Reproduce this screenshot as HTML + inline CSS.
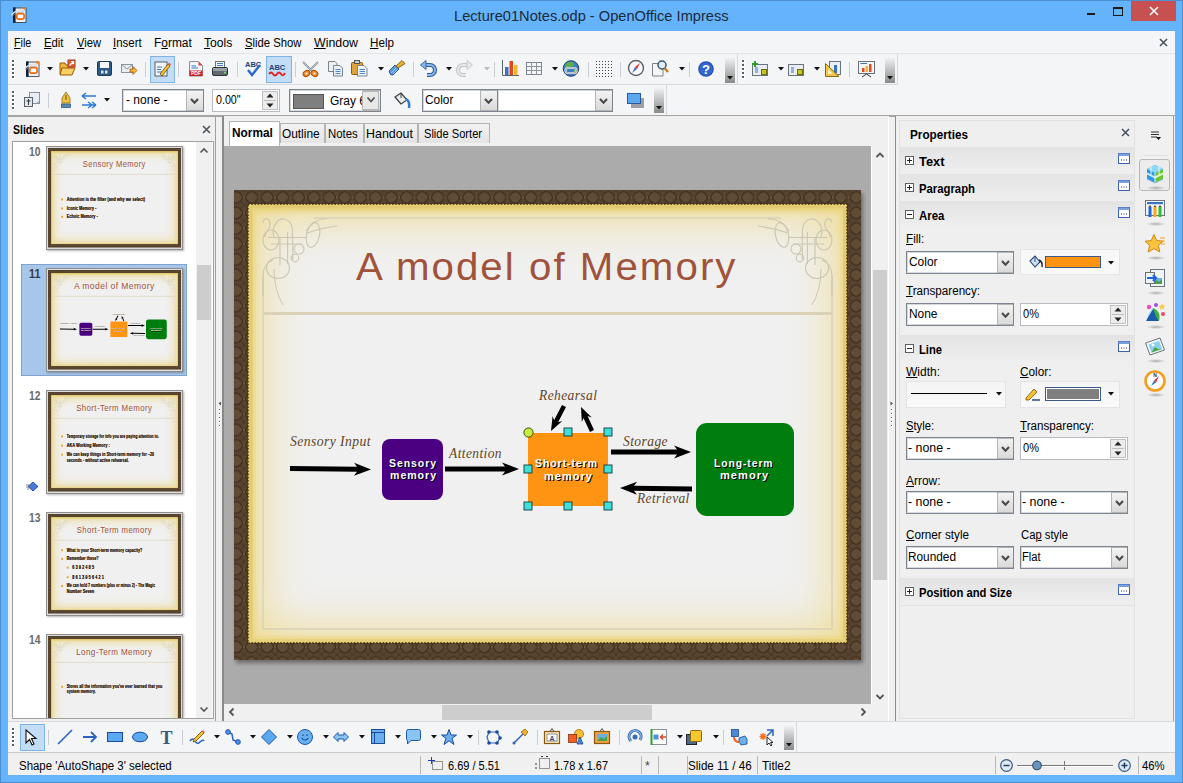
<!DOCTYPE html><html><head><meta charset="utf-8"><style>
*{margin:0;padding:0;box-sizing:border-box}
html,body{width:1183px;height:783px;overflow:hidden;background:#65b3fb;font-family:'Liberation Sans', sans-serif;}
div{position:absolute}
u{text-decoration:underline;text-underline-offset:1px;text-decoration-thickness:1px}
svg{position:absolute;overflow:visible}
</style></head><body><div style="position:absolute;left:0px;top:0px;width:1183px;height:783px;background:#65b3fb;border:1px solid #4c8fd0"></div><div style="position:absolute;left:454px;top:8px;font-size:15.2px;color:#1b2a3a;white-space:nowrap;line-height:1;font-family:'Liberation Sans', sans-serif;font-weight:normal;font-style:normal;letter-spacing:0px;transform-origin:0 0;transform:scaleX(0.9633);">Lecture01Notes.odp - OpenOffice Impress</div><div style="position:absolute;left:1087px;top:13px;width:8px;height:2px;background:#1a1a1a"></div><div style="position:absolute;left:1113px;top:7px;width:10px;height:9px;border:1px solid #1a1a1a;border-top-width:2px"></div><div style="position:absolute;left:1131px;top:1px;width:45px;height:20px;background:#c75050"></div><svg style="left:1149px;top:6px;" width="10" height="10" viewBox="0 0 10 10"><path d="M1 1L9 9M9 1L1 9" stroke="#fff" stroke-width="1.6"/></svg><svg style="left:11px;top:7px;" width="16" height="16" viewBox="0 0 16 16"><rect x="2.5" y="1" width="12.5" height="14.5" fill="#eef2f5" stroke="#2a3440" stroke-width="0.8"/><rect x="2" y="0.5" width="2.6" height="15.2" fill="#0c2138"/><rect x="5.8" y="6.6" width="7.3" height="5.6" rx="1.6" fill="#fff" stroke="#f06a10" stroke-width="1.7"/><path d="M10.5 0.5L15 4.5V0.5Z" fill="#f08020"/><path d="M0.5 8Q5 2 14 3.5" stroke="#dfe3e8" stroke-width="1.6" fill="none"/><path d="M1 9Q6 4 13 5" stroke="#9aa4ae" stroke-width="0.6" fill="none"/></svg><div style="position:absolute;left:8px;top:31px;width:1167px;height:744px;background:#f4f5f7"></div><div style="position:absolute;left:14.4px;top:36.8px;font-size:12.3px;color:#000;white-space:nowrap;line-height:1;font-family:'Liberation Sans', sans-serif;font-weight:normal;font-style:normal;letter-spacing:0px;transform-origin:0 0;transform:scaleX(0.8725);"><u>F</u>ile</div><div style="position:absolute;left:44.3px;top:36.8px;font-size:12.3px;color:#000;white-space:nowrap;line-height:1;font-family:'Liberation Sans', sans-serif;font-weight:normal;font-style:normal;letter-spacing:0px;transform-origin:0 0;transform:scaleX(0.9197);"><u>E</u>dit</div><div style="position:absolute;left:76.5px;top:36.8px;font-size:12.3px;color:#000;white-space:nowrap;line-height:1;font-family:'Liberation Sans', sans-serif;font-weight:normal;font-style:normal;letter-spacing:0px;transform-origin:0 0;transform:scaleX(0.9078);"><u>V</u>iew</div><div style="position:absolute;left:113.2px;top:36.8px;font-size:12.3px;color:#000;white-space:nowrap;line-height:1;font-family:'Liberation Sans', sans-serif;font-weight:normal;font-style:normal;letter-spacing:0px;transform-origin:0 0;transform:scaleX(0.9329);"><u>I</u>nsert</div><div style="position:absolute;left:154.2px;top:36.8px;font-size:12.3px;color:#000;white-space:nowrap;line-height:1;font-family:'Liberation Sans', sans-serif;font-weight:normal;font-style:normal;letter-spacing:0px;transform-origin:0 0;transform:scaleX(0.9700);">F<u>o</u>rmat</div><div style="position:absolute;left:204.2px;top:36.8px;font-size:12.3px;color:#000;white-space:nowrap;line-height:1;font-family:'Liberation Sans', sans-serif;font-weight:normal;font-style:normal;letter-spacing:0px;transform-origin:0 0;transform:scaleX(0.9854);"><u>T</u>ools</div><div style="position:absolute;left:245.3px;top:36.8px;font-size:12.3px;color:#000;white-space:nowrap;line-height:1;font-family:'Liberation Sans', sans-serif;font-weight:normal;font-style:normal;letter-spacing:0px;transform-origin:0 0;transform:scaleX(0.9182);"><u>S</u>lide Show</div><div style="position:absolute;left:314.1px;top:36.8px;font-size:12.3px;color:#000;white-space:nowrap;line-height:1;font-family:'Liberation Sans', sans-serif;font-weight:normal;font-style:normal;letter-spacing:0px;transform-origin:0 0;transform:scaleX(1.0057);"><u>W</u>indow</div><div style="position:absolute;left:370.4px;top:36.8px;font-size:12.3px;color:#000;white-space:nowrap;line-height:1;font-family:'Liberation Sans', sans-serif;font-weight:normal;font-style:normal;letter-spacing:0px;transform-origin:0 0;transform:scaleX(0.9481);"><u>H</u>elp</div><svg style="left:1159px;top:38px;" width="9" height="9" viewBox="0 0 9 9"><path d="M1 1L8 8M8 1L1 8" stroke="#4a5560" stroke-width="1.6"/></svg><div style="position:absolute;left:8px;top:53px;width:1167px;height:1px;background:#e3e5e8"></div><div style="position:absolute;left:8px;top:84px;width:890px;height:1px;background:#d7d9dc"></div><div style="position:absolute;left:737px;top:54px;width:1px;height:30px;background:#d7d9dc"></div><div style="position:absolute;left:897px;top:54px;width:1px;height:30px;background:#d7d9dc"></div><div style="position:absolute;left:666px;top:85px;width:1px;height:30px;background:#d7d9dc"></div><div style="position:absolute;left:12px;top:60px;width:3px;height:3px;background:#5a5f66;border-right:1px solid #fff;border-bottom:1px solid #fff"></div><div style="position:absolute;left:12px;top:64px;width:3px;height:3px;background:#5a5f66;border-right:1px solid #fff;border-bottom:1px solid #fff"></div><div style="position:absolute;left:12px;top:68px;width:3px;height:3px;background:#5a5f66;border-right:1px solid #fff;border-bottom:1px solid #fff"></div><div style="position:absolute;left:12px;top:72px;width:3px;height:3px;background:#5a5f66;border-right:1px solid #fff;border-bottom:1px solid #fff"></div><div style="position:absolute;left:12px;top:76px;width:3px;height:3px;background:#5a5f66;border-right:1px solid #fff;border-bottom:1px solid #fff"></div><div style="position:absolute;left:12px;top:91px;width:3px;height:3px;background:#5a5f66;border-right:1px solid #fff;border-bottom:1px solid #fff"></div><div style="position:absolute;left:12px;top:95px;width:3px;height:3px;background:#5a5f66;border-right:1px solid #fff;border-bottom:1px solid #fff"></div><div style="position:absolute;left:12px;top:99px;width:3px;height:3px;background:#5a5f66;border-right:1px solid #fff;border-bottom:1px solid #fff"></div><div style="position:absolute;left:12px;top:103px;width:3px;height:3px;background:#5a5f66;border-right:1px solid #fff;border-bottom:1px solid #fff"></div><div style="position:absolute;left:12px;top:107px;width:3px;height:3px;background:#5a5f66;border-right:1px solid #fff;border-bottom:1px solid #fff"></div><div style="position:absolute;left:742px;top:60px;width:3px;height:3px;background:#5a5f66;border-right:1px solid #fff;border-bottom:1px solid #fff"></div><div style="position:absolute;left:742px;top:64px;width:3px;height:3px;background:#5a5f66;border-right:1px solid #fff;border-bottom:1px solid #fff"></div><div style="position:absolute;left:742px;top:68px;width:3px;height:3px;background:#5a5f66;border-right:1px solid #fff;border-bottom:1px solid #fff"></div><div style="position:absolute;left:742px;top:72px;width:3px;height:3px;background:#5a5f66;border-right:1px solid #fff;border-bottom:1px solid #fff"></div><div style="position:absolute;left:742px;top:76px;width:3px;height:3px;background:#5a5f66;border-right:1px solid #fff;border-bottom:1px solid #fff"></div><div style="position:absolute;left:150px;top:56px;width:25px;height:27px;background:#c3ddf6;border:1px solid #7fb2e5"></div><div style="position:absolute;left:266px;top:56px;width:26px;height:27px;background:#c3ddf6;border:1px solid #7fb2e5"></div><svg style="left:24px;top:61px;" width="18" height="17" viewBox="0 0 18 17"><rect x="2.5" y="1" width="12.5" height="14.5" fill="#eef2f5" stroke="#2a3440" stroke-width="0.8"/><rect x="2" y="0.5" width="2.6" height="15.2" fill="#0c2138"/><rect x="5.8" y="6.6" width="7.3" height="5.6" rx="1.6" fill="#fff" stroke="#f06a10" stroke-width="1.7"/><path d="M10.5 0.5L15 4.5V0.5Z" fill="#f08020"/><path d="M0.5 8Q5 2 14 3.5" stroke="#dfe3e8" stroke-width="1.6" fill="none"/><path d="M1 9Q6 4 13 5" stroke="#9aa4ae" stroke-width="0.6" fill="none"/></svg><svg style="left:59px;top:60px;" width="18" height="17" viewBox="0 0 18 17"><path d="M1 3H6L7 5H13V14H1Z" fill="#f1b73b" stroke="#9a5a08"/><path d="M3 8H16L13 15H1Z" fill="#f8cf62" stroke="#9a5a08"/><rect x="9" y="0" width="7" height="7" fill="#e8642a" stroke="#a33"/><path d="M10.5 5.5L14.5 1.5M12 1.5H14.5V4" stroke="#fff" stroke-width="1.2" fill="none"/></svg><svg style="left:97px;top:61px;" width="18" height="17" viewBox="0 0 18 17"><rect x="0.5" y="0.5" width="14" height="14" rx="1.5" fill="#2c5a86" stroke="#1c3b5a"/><rect x="3" y="1" width="9" height="6" fill="#f4f7fa"/><rect x="4" y="9.5" width="2.5" height="3" fill="#dfe7ee"/><rect x="8" y="9.5" width="2.5" height="3" fill="#dfe7ee"/></svg><svg style="left:121px;top:64px;" width="18" height="17" viewBox="0 0 18 17"><rect x="0.5" y="0.5" width="11" height="8" fill="#e9edf1" stroke="#8d96a0"/><path d="M0.5 0.5L6 5L11.5 0.5" stroke="#8d96a0" fill="none"/><path d="M9 5H12V2.5L16 6.5L12 10.5V8H9Z" fill="#f7b538" stroke="#9c5a0a" stroke-width="0.8"/></svg><svg style="left:154px;top:61px;" width="18" height="17" viewBox="0 0 18 17"><rect x="1" y="1" width="12" height="14" fill="#f2f5f8" stroke="#56606a"/><path d="M3 6H8M3 8.5H7M3 11H8" stroke="#3a7bc8" stroke-width="1.2"/><path d="M6 13L14 3L16 5L8 15Z" fill="#f3c232" stroke="#6a4b10" stroke-width="0.8"/><path d="M14 3L15.2 1.6L17 3.4L16 5Z" fill="#e2607a"/></svg><svg style="left:189px;top:61px;" width="18" height="17" viewBox="0 0 18 17"><path d="M0.5 0.5H9.5L13.5 4.5V15H0.5Z" fill="#f3f5f7" stroke="#8a939b"/><path d="M9.5 0.5L13.5 4.5H9.5Z" fill="#e23b3b"/><path d="M2.5 5H7M2.5 7H9" stroke="#3a7bc8" stroke-width="1.2"/><rect x="0.5" y="9.5" width="13" height="5.5" fill="#d11f1f"/><text x="7" y="14" font-size="5" font-family="Liberation Sans" font-weight="bold" fill="#fff" text-anchor="middle">PDF</text></svg><svg style="left:212px;top:61px;" width="18" height="17" viewBox="0 0 18 17"><rect x="3.5" y="0.5" width="9" height="6" fill="#f4f6f8" stroke="#6a737c"/><path d="M5 2.5H11M5 4.5H11" stroke="#3a7bc8"/><rect x="0.5" y="6.5" width="15" height="8" rx="1.5" fill="#62696f" stroke="#2e3337"/><rect x="1" y="7" width="14" height="3" fill="#9aa1a7"/><circle cx="13" cy="11.5" r="0.9" fill="#6f6"/></svg><svg style="left:244px;top:60px;" width="18" height="17" viewBox="0 0 18 17"><text x="1" y="7" font-size="7.5" font-family="Liberation Sans" font-weight="bold" fill="#1f3f7a">ABC</text><path d="M4 10L8 15L16 5" stroke="#2a6bd0" stroke-width="2.4" fill="none"/></svg><svg style="left:268px;top:61px;" width="18" height="17" viewBox="0 0 18 17"><text x="1" y="9" font-size="7.5" font-family="Liberation Sans" font-weight="bold" fill="#1f3f7a">ABC</text><path d="M1 13Q3 10 5 13T9 13T13 13T17 12" stroke="#e02020" stroke-width="1.8" fill="none"/></svg><svg style="left:302px;top:61px;" width="18" height="17" viewBox="0 0 18 17"><path d="M1 1L11 11M16 1L6 11" stroke="#8c9297" stroke-width="1.8"/><path d="M1 1L11 11M16 1L6 11" stroke="#c9ced3" stroke-width="0.7"/><ellipse cx="4.5" cy="12.5" rx="3.6" ry="2.8" transform="rotate(-30 4.5 12.5)" fill="#f08a24" stroke="#9a4a08" stroke-width="0.9"/><ellipse cx="12.5" cy="12.5" rx="3.6" ry="2.8" transform="rotate(30 12.5 12.5)" fill="#f08a24" stroke="#9a4a08" stroke-width="0.9"/><circle cx="4.5" cy="12.5" r="1" fill="#fff"/><circle cx="12.5" cy="12.5" r="1" fill="#fff"/></svg><svg style="left:328px;top:61px;" width="18" height="17" viewBox="0 0 18 17"><path d="M0.5 0.5H7L9 2.5V10.5H0.5Z" fill="#eef1f4" stroke="#7b848d"/><path d="M5.5 4.5H12L14.5 7V15H5.5Z" fill="#eef1f4" stroke="#7b848d"/><path d="M7.5 8.5H12.5M7.5 10.5H12.5M7.5 12.5H12.5" stroke="#3a7bc8" stroke-width="0.9"/></svg><svg style="left:351px;top:60px;" width="18" height="17" viewBox="0 0 18 17"><rect x="0.5" y="2.5" width="11" height="12" rx="1" fill="#e0a33a" stroke="#8a5a14"/><rect x="3.5" y="0.5" width="5" height="3" fill="#c9cfd5" stroke="#555"/><path d="M6.5 5.5H13L16 8.5V16H6.5Z" fill="#f2f4f6" stroke="#7b848d"/><path d="M8.5 9.5H14M8.5 11.5H14M8.5 13.5H14" stroke="#3a7bc8" stroke-width="0.9"/></svg><svg style="left:388px;top:60px;" width="18" height="17" viewBox="0 0 18 17"><path d="M1 11L7 5L11 9L5 15Q2 16 1 11Z" fill="#5a9ae0" stroke="#23508a" stroke-width="0.9"/><path d="M3 13L8 8M5 14L9 10" stroke="#a8d0f8" stroke-width="0.8"/><path d="M8 6L14 0.5L17 3.5L10 8Z" fill="#e6b030" stroke="#7c5a14" stroke-width="0.9"/></svg><svg style="left:420px;top:60px;" width="18" height="17" viewBox="0 0 18 17"><path d="M5 5H10A5 5 0 0 1 10 15H7" stroke="#2c5f9c" stroke-width="4.2" fill="none"/><path d="M5 5H10A5 5 0 0 1 10 15H7" stroke="#8ab8ea" stroke-width="2" fill="none"/><path d="M0.5 5L6 0.5V9.5Z" fill="#8ab8ea" stroke="#2c5f9c" stroke-width="0.9"/></svg><svg style="left:456px;top:60px;" width="18" height="17" viewBox="0 0 18 17"><path d="M12 5H7A5 5 0 0 0 7 15H10" stroke="#c3c7ca" stroke-width="4.2" fill="none"/><path d="M12 5H7A5 5 0 0 0 7 15H10" stroke="#e6e8ea" stroke-width="2" fill="none"/><path d="M16.5 5L11 0.5V9.5Z" fill="#e6e8ea" stroke="#c3c7ca" stroke-width="0.9"/></svg><svg style="left:502px;top:60px;" width="18" height="17" viewBox="0 0 18 17"><path d="M0.5 0V15.5H17" stroke="#5a636b" fill="none"/><rect x="3" y="7" width="3.5" height="8" fill="#3a73c0"/><rect x="7.5" y="1" width="3.5" height="14" fill="#e2461d"/><rect x="12" y="5" width="3.5" height="10" fill="#f2b530"/></svg><svg style="left:526px;top:60px;" width="18" height="17" viewBox="0 0 18 17"><rect x="0.5" y="2.5" width="15" height="12" fill="#f3f5f7" stroke="#7b848d"/><path d="M0.5 6.5H15.5M0.5 10.5H15.5M5.5 2.5V14.5M10.5 2.5V14.5" stroke="#8d969f"/></svg><svg style="left:562px;top:60px;" width="18" height="17" viewBox="0 0 18 17"><circle cx="9" cy="8.5" r="7.8" fill="#3a7ec8" stroke="#22466a"/><path d="M3 5Q6 1 10 2Q13 4 12 6Q8 6 6 9Q3 9 3 5Z" fill="#5cb04a"/><path d="M11 10Q15 9 16 12Q13 15 11 14Z" fill="#5cb04a"/><rect x="3.5" y="8" width="11" height="5" rx="2.5" fill="none" stroke="#e8ecef" stroke-width="2"/><rect x="3.5" y="8" width="11" height="5" rx="2.5" fill="none" stroke="#6a7480" stroke-width="0.6"/></svg><svg style="left:595px;top:60px;" width="18" height="17" viewBox="0 0 18 17"><rect x="1" y="1" width="1" height="1" fill="#444"/><rect x="1" y="4" width="1" height="1" fill="#444"/><rect x="1" y="7" width="1" height="1" fill="#444"/><rect x="1" y="10" width="1" height="1" fill="#444"/><rect x="1" y="13" width="1" height="1" fill="#444"/><rect x="1" y="16" width="1" height="1" fill="#444"/><rect x="4" y="1" width="1" height="1" fill="#444"/><rect x="4" y="4" width="1" height="1" fill="#444"/><rect x="4" y="7" width="1" height="1" fill="#444"/><rect x="4" y="10" width="1" height="1" fill="#444"/><rect x="4" y="13" width="1" height="1" fill="#444"/><rect x="4" y="16" width="1" height="1" fill="#444"/><rect x="7" y="1" width="1" height="1" fill="#444"/><rect x="7" y="4" width="1" height="1" fill="#444"/><rect x="7" y="7" width="1" height="1" fill="#444"/><rect x="7" y="10" width="1" height="1" fill="#444"/><rect x="7" y="13" width="1" height="1" fill="#444"/><rect x="7" y="16" width="1" height="1" fill="#444"/><rect x="10" y="1" width="1" height="1" fill="#444"/><rect x="10" y="4" width="1" height="1" fill="#444"/><rect x="10" y="7" width="1" height="1" fill="#444"/><rect x="10" y="10" width="1" height="1" fill="#444"/><rect x="10" y="13" width="1" height="1" fill="#444"/><rect x="10" y="16" width="1" height="1" fill="#444"/><rect x="13" y="1" width="1" height="1" fill="#444"/><rect x="13" y="4" width="1" height="1" fill="#444"/><rect x="13" y="7" width="1" height="1" fill="#444"/><rect x="13" y="10" width="1" height="1" fill="#444"/><rect x="13" y="13" width="1" height="1" fill="#444"/><rect x="13" y="16" width="1" height="1" fill="#444"/><rect x="16" y="1" width="1" height="1" fill="#444"/><rect x="16" y="4" width="1" height="1" fill="#444"/><rect x="16" y="7" width="1" height="1" fill="#444"/><rect x="16" y="10" width="1" height="1" fill="#444"/><rect x="16" y="13" width="1" height="1" fill="#444"/><rect x="16" y="16" width="1" height="1" fill="#444"/></svg><svg style="left:628px;top:60px;" width="18" height="17" viewBox="0 0 18 17"><circle cx="8" cy="8" r="7.5" fill="#f8f8f8" stroke="#5a636b" stroke-width="1.4"/><path d="M12 3L7 7L9 9Z" fill="#e23030"/><path d="M4 13L7 7L9 9Z" fill="#3a73c0"/></svg><svg style="left:652px;top:60px;" width="18" height="17" viewBox="0 0 18 17"><path d="M0.5 3.5H8L11 6.5V16H0.5Z" fill="#f3f5f7" stroke="#7b848d"/><circle cx="10" cy="5" r="4" fill="#dfeefa" stroke="#3b5370" stroke-width="1.5"/><path d="M12.5 8L16 12" stroke="#c07a10" stroke-width="2.2"/></svg><svg style="left:698px;top:61px;" width="18" height="17" viewBox="0 0 18 17"><circle cx="8" cy="8" r="7.8" fill="#2350b8"/><circle cx="8" cy="8" r="6.6" fill="#3366cc"/><text x="8" y="12.8" font-size="13" font-family="Liberation Sans" font-weight="bold" fill="#fff" text-anchor="middle">?</text></svg><svg style="left:752px;top:61px;" width="18" height="17" viewBox="0 0 18 17"><rect x="0.5" y="3.5" width="15" height="11" fill="#e8eef3" stroke="#6a737c"/><path d="M3 7H6M3 9H6M3 11H6" stroke="#3a73c0"/><rect x="9.5" y="8.5" width="5" height="5" fill="#c8c820" stroke="#6a6a10"/><path d="M3 0V6M0 3H6" stroke="#28a028" stroke-width="2"/></svg><svg style="left:788px;top:61px;" width="18" height="17" viewBox="0 0 18 17"><rect x="0.5" y="3.5" width="15" height="11" fill="#e8eef3" stroke="#6a737c"/><path d="M3 7H6M3 9H6M3 11H6" stroke="#3a73c0"/><rect x="9.5" y="8.5" width="5" height="5" fill="#c8c820" stroke="#6a6a10"/></svg><svg style="left:825px;top:61px;" width="18" height="17" viewBox="0 0 18 17"><rect x="4.5" y="0.5" width="11" height="13" fill="#e8eef3" stroke="#6a737c"/><rect x="9" y="4" width="3" height="8" fill="#3a73c0"/><path d="M0.5 2.5V15.5H14Z" fill="#f5c542" stroke="#8a6a14"/><path d="M3 8V13H8Z" fill="#f8f1d4"/></svg><svg style="left:858px;top:61px;" width="18" height="17" viewBox="0 0 18 17"><rect x="0.5" y="0.5" width="16" height="12" fill="#f2f5f8" stroke="#6a737c"/><path d="M2.5 2.5H9" stroke="#3a73c0"/><rect x="4" y="7" width="2.5" height="4" fill="#e24a1d"/><rect x="7.5" y="5" width="2.5" height="6" fill="#f2b530"/><rect x="11" y="3" width="2.5" height="8" fill="#e24a1d"/><path d="M4 16L8.5 13L13 16" stroke="#333" fill="none"/></svg><svg style="left:47px;top:67px;" width="6" height="4" viewBox="0 0 6 4"><path d="M0 0H6L3 3.5Z" fill="#111"/></svg><svg style="left:83px;top:67px;" width="6" height="4" viewBox="0 0 6 4"><path d="M0 0H6L3 3.5Z" fill="#111"/></svg><svg style="left:378px;top:67px;" width="6" height="4" viewBox="0 0 6 4"><path d="M0 0H6L3 3.5Z" fill="#111"/></svg><svg style="left:446px;top:67px;" width="6" height="4" viewBox="0 0 6 4"><path d="M0 0H6L3 3.5Z" fill="#111"/></svg><svg style="left:552px;top:67px;" width="6" height="4" viewBox="0 0 6 4"><path d="M0 0H6L3 3.5Z" fill="#111"/></svg><svg style="left:679px;top:67px;" width="6" height="4" viewBox="0 0 6 4"><path d="M0 0H6L3 3.5Z" fill="#111"/></svg><svg style="left:778px;top:67px;" width="6" height="4" viewBox="0 0 6 4"><path d="M0 0H6L3 3.5Z" fill="#111"/></svg><svg style="left:814px;top:67px;" width="6" height="4" viewBox="0 0 6 4"><path d="M0 0H6L3 3.5Z" fill="#111"/></svg><svg style="left:484px;top:67px;" width="6" height="4" viewBox="0 0 6 4"><path d="M0 0H6L3 3.5Z" fill="#b8bcc0"/></svg><div style="position:absolute;left:145px;top:62px;width:1px;height:15px;background:#c9ccd0"></div><div style="position:absolute;left:178px;top:62px;width:1px;height:15px;background:#c9ccd0"></div><div style="position:absolute;left:237px;top:62px;width:1px;height:15px;background:#c9ccd0"></div><div style="position:absolute;left:295px;top:62px;width:1px;height:15px;background:#c9ccd0"></div><div style="position:absolute;left:413px;top:62px;width:1px;height:15px;background:#c9ccd0"></div><div style="position:absolute;left:494px;top:62px;width:1px;height:15px;background:#c9ccd0"></div><div style="position:absolute;left:588px;top:62px;width:1px;height:15px;background:#c9ccd0"></div><div style="position:absolute;left:620px;top:62px;width:1px;height:15px;background:#c9ccd0"></div><div style="position:absolute;left:689px;top:62px;width:1px;height:15px;background:#c9ccd0"></div><div style="position:absolute;left:849px;top:62px;width:1px;height:15px;background:#c9ccd0"></div><div style="position:absolute;left:725px;top:57px;width:10px;height:26px;background:linear-gradient(#f4f5f7,#8a8a8a)"></div><svg style="left:727px;top:76px;" width="6" height="4" viewBox="0 0 6 4"><path d="M0 0H6L3 3.5Z" fill="#111"/></svg><div style="position:absolute;left:885px;top:57px;width:10px;height:26px;background:linear-gradient(#f4f5f7,#8a8a8a)"></div><svg style="left:887px;top:76px;" width="6" height="4" viewBox="0 0 6 4"><path d="M0 0H6L3 3.5Z" fill="#111"/></svg><div style="position:absolute;left:12px;top:91px;width:3px;height:3px;background:#5a5f66;border-right:1px solid #fff;border-bottom:1px solid #fff"></div><div style="position:absolute;left:12px;top:95px;width:3px;height:3px;background:#5a5f66;border-right:1px solid #fff;border-bottom:1px solid #fff"></div><div style="position:absolute;left:12px;top:99px;width:3px;height:3px;background:#5a5f66;border-right:1px solid #fff;border-bottom:1px solid #fff"></div><div style="position:absolute;left:12px;top:103px;width:3px;height:3px;background:#5a5f66;border-right:1px solid #fff;border-bottom:1px solid #fff"></div><div style="position:absolute;left:12px;top:107px;width:3px;height:3px;background:#5a5f66;border-right:1px solid #fff;border-bottom:1px solid #fff"></div><svg style="left:24px;top:92px;" width="18" height="17" viewBox="0 0 18 17"><rect x="5.5" y="0.5" width="10" height="11" fill="#e8eef3" stroke="#8a939b"/><path d="M15.5 9L12 12" stroke="#8a939b" fill="#fff"/><rect x="0.5" y="5.5" width="8" height="9" fill="#e1e6ea" stroke="#5a636b"/><path d="M4.5 7V13M2.5 9H6.5" stroke="#333"/></svg><div style="position:absolute;left:48px;top:93px;width:1px;height:15px;background:#c9ccd0"></div><svg style="left:61px;top:92px;" width="18" height="17" viewBox="0 0 18 17"><path d="M5 0L9 6V11H1V6Z" fill="#f2c440" stroke="#8a6a14" stroke-width="0.8"/><path d="M5 3V8" stroke="#6a4a10"/><rect x="0.5" y="12" width="9" height="3.5" fill="#5a8ab8" stroke="#2a4a6a" stroke-width="0.7"/></svg><svg style="left:81px;top:93px;" width="18" height="17" viewBox="0 0 18 17"><path d="M1 3H15M1 3L5 0M1 3L5 6" stroke="#2c7ad8" stroke-width="1.5" fill="none"/><path d="M1 12H15M15 12L11 9M15 12L11 15M11 12L7 9M11 12L7 15" stroke="#2c7ad8" stroke-width="1.4" fill="none"/></svg><svg style="left:104px;top:98px;" width="6" height="4" viewBox="0 0 6 4"><path d="M0 0H6L3 3.5Z" fill="#111"/></svg><div style="position:absolute;left:122px;top:89px;width:82px;height:23px;background:#fff;border:1px solid #7d848e;box-shadow:inset 0 0 0 1px #d6d9dd"></div><div style="position:absolute;left:186px;top:90px;width:17px;height:21px;background:linear-gradient(#f3f3f3,#dadada);border:1px solid #b4b4b4;border-right:none"></div><svg style="left:190.0px;top:98.0px;" width="9" height="6" viewBox="0 0 9 6"><path d="M1 1L4.5 4.8L8 1" stroke="#4a4a4a" stroke-width="2.1" fill="none"/></svg><div style="position:absolute;left:125.6px;top:94.4px;font-size:12.3px;color:#000;white-space:nowrap;line-height:1;font-family:'Liberation Sans', sans-serif;font-weight:normal;font-style:normal;letter-spacing:0px;transform-origin:0 0;transform:scaleX(0.9813);">- none -</div><div style="position:absolute;left:212px;top:89px;width:68px;height:23px;background:#fff;border:1px solid #b8bcc2"></div><div style="position:absolute;left:262px;top:91px;width:16px;height:19px;background:#ececec;border:1px solid #c0c0c0"></div><div style="position:absolute;left:264px;top:100px;width:12px;height:1px;background:#bbb"></div><svg style="left:266px;top:93px;" width="8" height="5" viewBox="0 0 8 5"><path d="M0.5 4.5L4 0.5L7.5 4.5Z" fill="#222"/></svg><svg style="left:266px;top:103px;" width="8" height="5" viewBox="0 0 8 5"><path d="M0.5 0.5L4 4.5L7.5 0.5Z" fill="#222"/></svg><div style="position:absolute;left:216.4px;top:94.4px;font-size:12.3px;color:#000;white-space:nowrap;line-height:1;font-family:'Liberation Sans', sans-serif;font-weight:normal;font-style:normal;letter-spacing:0px;transform-origin:0 0;transform:scaleX(0.8689);">0.00"</div><div style="position:absolute;left:289px;top:89px;width:92px;height:23px;background:#fff;border:1px solid #7d848e;box-shadow:inset 0 0 0 1px #d6d9dd"></div><div style="position:absolute;left:363px;top:90px;width:17px;height:21px;background:linear-gradient(#f3f3f3,#dadada);border:1px solid #b4b4b4;border-right:none"></div><svg style="left:367.0px;top:98.0px;" width="9" height="6" viewBox="0 0 9 6"><path d="M1 1L4.5 4.8L8 1" stroke="#4a4a4a" stroke-width="2.1" fill="none"/></svg><div style="position:absolute;left:293px;top:94px;width:31px;height:15px;background:#7f7f7f;border:1px solid #555"></div><div style="position:absolute;left:329.6px;top:94.8px;font-size:12.3px;color:#000;white-space:nowrap;line-height:1;font-family:'Liberation Sans', sans-serif;font-weight:normal;font-style:normal;letter-spacing:0px;transform-origin:0 0;transform:scaleX(0.9754);">Gray 6</div><div style="position:absolute;left:362px;top:91px;width:17px;height:19px;background:#e8e8e8;border:1px solid #b5b5b5"></div><svg style="left:367px;top:97px;" width="8" height="6" viewBox="0 0 8 6"><path d="M0.5 0.5L4 4.5L7.5 0.5" stroke="#555" stroke-width="1.8" fill="none"/></svg><svg style="left:393px;top:92px;" width="18" height="17" viewBox="0 0 18 17"><path d="M2 5L8 1L14 8L8 12Z" fill="#e9edf0" stroke="#3a4046" stroke-width="1.2"/><path d="M8 1V6" stroke="#3a4046"/><path d="M13 7Q17 9 16 16" stroke="#2c7ad8" stroke-width="2.5" fill="none"/></svg><div style="position:absolute;left:422px;top:89px;width:76px;height:23px;background:#fff;border:1px solid #7d848e;box-shadow:inset 0 0 0 1px #d6d9dd"></div><div style="position:absolute;left:480px;top:90px;width:17px;height:21px;background:linear-gradient(#f3f3f3,#dadada);border:1px solid #b4b4b4;border-right:none"></div><svg style="left:484.0px;top:98.0px;" width="9" height="6" viewBox="0 0 9 6"><path d="M1 1L4.5 4.8L8 1" stroke="#4a4a4a" stroke-width="2.1" fill="none"/></svg><div style="position:absolute;left:424.6px;top:94.4px;font-size:12.3px;color:#000;white-space:nowrap;line-height:1;font-family:'Liberation Sans', sans-serif;font-weight:normal;font-style:normal;letter-spacing:0px;transform-origin:0 0;transform:scaleX(0.9663);">Color</div><div style="position:absolute;left:497px;top:89px;width:116px;height:23px;background:#fff;border:1px solid #7d848e;box-shadow:inset 0 0 0 1px #d6d9dd"></div><div style="position:absolute;left:595px;top:90px;width:17px;height:21px;background:linear-gradient(#f3f3f3,#dadada);border:1px solid #b4b4b4;border-right:none"></div><svg style="left:599.0px;top:98.0px;" width="9" height="6" viewBox="0 0 9 6"><path d="M1 1L4.5 4.8L8 1" stroke="#4a4a4a" stroke-width="2.1" fill="none"/></svg><svg style="left:627px;top:93px;" width="18" height="17" viewBox="0 0 18 17"><rect x="4" y="5" width="13" height="10" fill="#9aa0a6"/><rect x="0.5" y="0.5" width="13" height="10" fill="#5aa8f0" stroke="#2a5a9a"/></svg><div style="position:absolute;left:654px;top:87px;width:10px;height:26px;background:linear-gradient(#f4f5f7,#8a8a8a)"></div><svg style="left:656px;top:106px;" width="6" height="4" viewBox="0 0 6 4"><path d="M0 0H6L3 3.5Z" fill="#111"/></svg><div style="position:absolute;left:8px;top:116px;width:1167px;height:606px;background:#f0f0f0"></div><div style="position:absolute;left:8px;top:116px;width:208px;height:606px;background:#f0f0f0;border-right:1px solid #a0a0a0"></div><div style="position:absolute;left:12.8px;top:125px;font-size:11.9px;color:#000;white-space:nowrap;line-height:1;font-family:'Liberation Sans', sans-serif;font-weight:bold;font-style:normal;letter-spacing:0px;transform-origin:0 0;transform:scaleX(0.8849);">Slides</div><svg style="left:202px;top:125px;" width="9" height="9" viewBox="0 0 9 9"><path d="M1 1L8 8M8 1L1 8" stroke="#4a5560" stroke-width="1.6"/></svg><div style="position:absolute;left:12px;top:141px;width:202px;height:578px;background:#fff;border:1px solid #a0a0a0"></div><div style="position:absolute;left:196px;top:142px;width:16px;height:576px;background:#f0f0f0"></div><div style="position:absolute;left:197px;top:265px;width:14px;height:55px;background:#cdcdcd"></div><svg style="left:200px;top:148px;" width="8" height="5" viewBox="0 0 8 5"><path d="M0.5 4.5L4 1L7.5 4.5" stroke="#555" stroke-width="1.6" fill="none"/></svg><svg style="left:200px;top:707px;" width="8" height="5" viewBox="0 0 8 5"><path d="M0.5 0.5L4 4L7.5 0.5" stroke="#555" stroke-width="1.6" fill="none"/></svg><div style="position:absolute;left:216px;top:116px;width:8px;height:606px;background:#f0f0f0"></div><div style="position:absolute;left:223px;top:116px;width:1px;height:606px;background:#8c8c8c"></div><div style="position:absolute;left:8px;top:115px;width:1167px;height:2px;background:#a4a4a4"></div><div style="position:absolute;left:224px;top:116px;width:665px;height:30px;background:#f0f0f0"></div><div style="position:absolute;left:280px;top:123px;width:45px;height:20px;background:linear-gradient(#f2f2f2,#e4e4e4);border:1px solid #b4b4b4;border-bottom:none"></div><div style="position:absolute;left:281.8px;top:127.5px;font-size:12.1px;color:#000;white-space:nowrap;line-height:1;font-family:'Liberation Sans', sans-serif;font-weight:normal;font-style:normal;letter-spacing:0px;transform-origin:0 0;transform:scaleX(0.9810);">Outline</div><div style="position:absolute;left:325px;top:123px;width:39px;height:20px;background:linear-gradient(#f2f2f2,#e4e4e4);border:1px solid #b4b4b4;border-bottom:none"></div><div style="position:absolute;left:328.4px;top:127.5px;font-size:12.1px;color:#000;white-space:nowrap;line-height:1;font-family:'Liberation Sans', sans-serif;font-weight:normal;font-style:normal;letter-spacing:0px;transform-origin:0 0;transform:scaleX(0.9432);">Notes</div><div style="position:absolute;left:364px;top:123px;width:54px;height:20px;background:linear-gradient(#f2f2f2,#e4e4e4);border:1px solid #b4b4b4;border-bottom:none"></div><div style="position:absolute;left:366px;top:127.5px;font-size:12.1px;color:#000;white-space:nowrap;line-height:1;font-family:'Liberation Sans', sans-serif;font-weight:normal;font-style:normal;letter-spacing:0px;transform-origin:0 0;transform:scaleX(1.0277);">Handout</div><div style="position:absolute;left:418px;top:123px;width:72px;height:20px;background:linear-gradient(#f2f2f2,#e4e4e4);border:1px solid #b4b4b4;border-bottom:none"></div><div style="position:absolute;left:424px;top:127.5px;font-size:12.1px;color:#000;white-space:nowrap;line-height:1;font-family:'Liberation Sans', sans-serif;font-weight:normal;font-style:normal;letter-spacing:0px;transform-origin:0 0;transform:scaleX(0.9179);">Slide Sorter</div><div style="position:absolute;left:229px;top:121px;width:51px;height:25px;background:#fff;border:1px solid #b4b4b4;border-bottom:none"></div><div style="position:absolute;left:231.6px;top:127.4px;font-size:12.1px;color:#000;white-space:nowrap;line-height:1;font-family:'Liberation Sans', sans-serif;font-weight:bold;font-style:normal;letter-spacing:0px;transform-origin:0 0;transform:scaleX(0.9791);">Normal</div><div style="position:absolute;left:224px;top:146px;width:647px;height:558px;background:#ababab"></div><div style="position:absolute;left:871px;top:146px;width:1px;height:558px;background:#fff"></div><div style="position:absolute;left:872px;top:146px;width:17px;height:576px;background:#f0f0f0"></div><div style="position:absolute;left:873px;top:270px;width:14px;height:310px;background:#cdcdcd"></div><svg style="left:876px;top:152px;" width="8" height="6" viewBox="0 0 8 6"><path d="M0.5 5L4 1.5L7.5 5" stroke="#555" stroke-width="1.8" fill="none"/></svg><svg style="left:876px;top:694px;" width="8" height="6" viewBox="0 0 8 6"><path d="M0.5 1L4 4.5L7.5 1" stroke="#555" stroke-width="1.8" fill="none"/></svg><div style="position:absolute;left:224px;top:704px;width:648px;height:18px;background:#f0f0f0"></div><div style="position:absolute;left:442px;top:705px;width:210px;height:15px;background:#cdcdcd"></div><svg style="left:229px;top:708px;" width="5" height="8" viewBox="0 0 5 8"><path d="M4.5 0.5L1 4L4.5 7.5" stroke="#555" stroke-width="1.8" fill="none"/></svg><svg style="left:861px;top:708px;" width="5" height="8" viewBox="0 0 5 8"><path d="M0.5 0.5L4 4L0.5 7.5" stroke="#555" stroke-width="1.8" fill="none"/></svg><div style="position:absolute;left:888px;top:116px;width:1px;height:606px;background:#fff"></div><div style="position:absolute;left:895px;top:116px;width:1px;height:606px;background:#8c8c8c"></div><div style="left:234px;top:190px;width:627px;height:470px;transform-origin:0 0;transform:scale(1.0);box-shadow:2px 3px 4px rgba(0,0,0,0.38);overflow:hidden"><svg style="left:0;top:0" width="627" height="470"><defs><pattern id="pb" width="15.5" height="15.5" patternUnits="userSpaceOnUse" x="-5.5" y="-0.3"><rect width="15.5" height="15.5" fill="#564330"/><path d="M0 0L15.5 15.5M15.5 0L0 15.5" stroke="#3c2c1a" stroke-width="0.8" opacity="0.7"/><path d="M1.2 7.75Q3.5 2.6 7.75 1.6Q12 2.6 14.3 7.75Q12 12.9 7.75 13.9Q3.5 12.9 1.2 7.75Z" fill="#604c36" stroke="#3a2a18" stroke-width="1"/><circle cx="0" cy="7.75" r="1.1" fill="#6a563e"/><circle cx="15.5" cy="7.75" r="1.1" fill="#6a563e"/></pattern></defs><rect width="627" height="470" fill="url(#pb)"/><rect x="14" y="14" width="599" height="439" fill="#e3ca68" stroke="#3a2a12" stroke-width="1.4" stroke-dasharray="1.6 1.6"/><rect x="15.5" y="15.5" width="596" height="436" fill="#e8d27c"/><rect x="17" y="17" width="593" height="431" fill="none" stroke="#d8bf60" stroke-width="1" opacity="0.6"/></svg><div style="left:19px;top:20px;width:590px;height:429px;background:#f0f0f0;box-shadow:inset 0 0 44px 10px rgba(238,214,118,0.72), inset 0 0 5px 2px rgba(228,204,108,0.7)"></div><svg style="left:0;top:0" width="627" height="470"><path d="M80 28H547M29 86V439H598V86" fill="none" stroke="#cdc8b4" stroke-width="1"/><rect x="29" y="122" width="569" height="3" fill="#d9d2b6"/><g transform="translate(21,20)"><g fill="none" stroke="#cbc7b3" stroke-width="1.15"><ellipse cx="58" cy="25" rx="6.5" ry="12.5" transform="rotate(12 58 25)"/><path d="M52 23Q66 18 82 16"/><path d="M72 8.7Q58 9 51 21"/><path d="M8 13C9 6 16 8 15 16C14 21 9 22 10 27"/><path d="M19 27C16 18 22 8 29 9C36 10 39 18 37 27"/><path d="M13 27.5H51M16 34H47"/><path d="M25 27V55M32.6 22V54M37.7 25V50"/><circle cx="44" cy="39" r="5"/><circle cx="40" cy="48" r="3.8"/><ellipse cx="16" cy="30" rx="8" ry="10"/><ellipse cx="23" cy="58" rx="11.5" ry="10.5"/><path d="M19 59Q19 80 28 95" stroke-width="1"/><path d="M8 86V66C8 58 12 52 18 50"/></g></g><g transform="translate(627,0) scale(-1,1)"><g transform="translate(21,20)"><g fill="none" stroke="#cbc7b3" stroke-width="1.15"><ellipse cx="58" cy="25" rx="6.5" ry="12.5" transform="rotate(12 58 25)"/><path d="M52 23Q66 18 82 16"/><path d="M72 8.7Q58 9 51 21"/><path d="M8 13C9 6 16 8 15 16C14 21 9 22 10 27"/><path d="M19 27C16 18 22 8 29 9C36 10 39 18 37 27"/><path d="M13 27.5H51M16 34H47"/><path d="M25 27V55M32.6 22V54M37.7 25V50"/><circle cx="44" cy="39" r="5"/><circle cx="40" cy="48" r="3.8"/><ellipse cx="16" cy="30" rx="8" ry="10"/><ellipse cx="23" cy="58" rx="11.5" ry="10.5"/><path d="M19 59Q19 80 28 95" stroke-width="1"/><path d="M8 86V66C8 58 12 52 18 50"/></g></g></g></svg><div style="position:absolute;left:121.5px;top:57.24790000000002px;font-size:39.4px;color:#a0533a;white-space:nowrap;line-height:1;font-family:'Liberation Sans', sans-serif;font-weight:normal;font-style:normal;letter-spacing:2px;transform-origin:0 0;transform:scaleX(1.0219);">A model of Memory</div><div style="position:absolute;left:56px;top:245.31px;font-size:13.6px;color:#5e4526;white-space:nowrap;line-height:1;font-family:'Liberation Serif', serif;font-weight:normal;font-style:italic;letter-spacing:0.4px;transform-origin:0 0;transform:scaleX(1.0082);">Sensory Input</div><div style="position:absolute;left:215px;top:256.51px;font-size:13.6px;color:#5e4526;white-space:nowrap;line-height:1;font-family:'Liberation Serif', serif;font-weight:normal;font-style:italic;letter-spacing:0.4px;transform-origin:0 0;transform:scaleX(0.9918);">Attention</div><div style="position:absolute;left:304.70000000000005px;top:199.41000000000003px;font-size:13.6px;color:#5e4526;white-space:nowrap;line-height:1;font-family:'Liberation Serif', serif;font-weight:normal;font-style:italic;letter-spacing:0.4px;transform-origin:0 0;transform:scaleX(0.9929);">Rehearsal</div><div style="position:absolute;left:389px;top:245.01px;font-size:13.6px;color:#5e4526;white-space:nowrap;line-height:1;font-family:'Liberation Serif', serif;font-weight:normal;font-style:italic;letter-spacing:0.4px;transform-origin:0 0;transform:scaleX(0.9979);">Storage</div><div style="position:absolute;left:402.6px;top:302.41px;font-size:13.6px;color:#5e4526;white-space:nowrap;line-height:1;font-family:'Liberation Serif', serif;font-weight:normal;font-style:italic;letter-spacing:0.4px;transform-origin:0 0;transform:scaleX(0.9865);">Retrieval</div><svg style="left:0;top:0" width="627" height="470"><path d="M56.0 281.0L123.0 281.8L119.9 285.8L137.0 279.5L120.1 272.8L123.0 276.8L56.0 276.0Z" fill="#000"/><path d="M211.0 281.5L271.0 281.5L268.0 285.5L285.0 279.0L268.0 272.5L271.0 276.5L211.0 276.5Z" fill="#000"/><path d="M377.0 264.5L443.0 264.5L440.0 268.5L457.0 262.0L440.0 255.5L443.0 259.5L377.0 259.5Z" fill="#000"/><path d="M458.0 296.5L400.0 295.7L403.1 291.7L386.0 298.0L402.9 304.7L400.0 300.7L458.0 301.5Z" fill="#000"/><path d="M328.0 215.0L320.1 230.2L318.6 226.0L317.0 241.0L328.3 231.1L324.1 232.3L332.0 217.0Z" fill="#000"/><path d="M360.0 240.1L353.6 226.1L357.8 227.4L347.0 217.0L347.8 232.0L349.5 227.9L356.0 241.9Z" fill="#000"/></svg><div style="left:148px;top:249px;width:61px;height:61px;background:#4b0082;border-radius:8px"></div><div style="left:294px;top:243px;width:80px;height:73px;background:#ff9412;border-radius:0px"></div><div style="left:462px;top:233px;width:98px;height:93px;background:#007d0f;border-radius:11px"></div><div style="position:absolute;left:155px;top:267.6885px;font-size:11px;color:#fff;white-space:nowrap;line-height:1;font-family:'Liberation Sans', sans-serif;font-weight:bold;font-style:normal;letter-spacing:1px;transform-origin:0 0;transform:scaleX(0.9520);text-shadow:1px 1px 0 #000;">Sensory</div><div style="position:absolute;left:156px;top:280.1885px;font-size:11px;color:#fff;white-space:nowrap;line-height:1;font-family:'Liberation Sans', sans-serif;font-weight:bold;font-style:normal;letter-spacing:1px;transform-origin:0 0;transform:scaleX(0.9632);text-shadow:1px 1px 0 #000;">memory</div><div style="position:absolute;left:301.4px;top:268.2885px;font-size:11px;color:#fff;white-space:nowrap;line-height:1;font-family:'Liberation Sans', sans-serif;font-weight:bold;font-style:normal;letter-spacing:1px;transform-origin:0 0;transform:scaleX(0.9512);text-shadow:1px 1px 0 #000;">Short-term</div><div style="position:absolute;left:309.70000000000005px;top:280.6885px;font-size:11px;color:#fff;white-space:nowrap;line-height:1;font-family:'Liberation Sans', sans-serif;font-weight:bold;font-style:normal;letter-spacing:1px;transform-origin:0 0;transform:scaleX(1.0001);text-shadow:1px 1px 0 #000;">memory</div><div style="position:absolute;left:480.29999999999995px;top:267.9885px;font-size:11px;color:#fff;white-space:nowrap;line-height:1;font-family:'Liberation Sans', sans-serif;font-weight:bold;font-style:normal;letter-spacing:1px;transform-origin:0 0;transform:scaleX(0.9386);text-shadow:1px 1px 0 #000;">Long-term</div><div style="position:absolute;left:486.29999999999995px;top:280.1885px;font-size:11px;color:#fff;white-space:nowrap;line-height:1;font-family:'Liberation Sans', sans-serif;font-weight:bold;font-style:normal;letter-spacing:1px;transform-origin:0 0;transform:scaleX(1.0083);text-shadow:1px 1px 0 #000;">memory</div></div><svg style="left:0px;top:0px;" width="1183" height="783" viewBox="0 0 1183 783"><rect x="564" y="428" width="8" height="8" fill="#3fe0dc" stroke="#0d3b3a" stroke-width="0.9"/><rect x="604" y="428" width="8" height="8" fill="#3fe0dc" stroke="#0d3b3a" stroke-width="0.9"/><rect x="524" y="465" width="8" height="8" fill="#3fe0dc" stroke="#0d3b3a" stroke-width="0.9"/><rect x="604" y="465" width="8" height="8" fill="#3fe0dc" stroke="#0d3b3a" stroke-width="0.9"/><rect x="524" y="502" width="8" height="8" fill="#3fe0dc" stroke="#0d3b3a" stroke-width="0.9"/><rect x="564" y="502" width="8" height="8" fill="#3fe0dc" stroke="#0d3b3a" stroke-width="0.9"/><rect x="604" y="502" width="8" height="8" fill="#3fe0dc" stroke="#0d3b3a" stroke-width="0.9"/><circle cx="528.5" cy="432.5" r="4.6" fill="#c6ef3c" stroke="#2a3a0a" stroke-width="0.9"/></svg><svg style="left:218px;top:401px;" width="4" height="5" viewBox="0 0 4 5"><path d="M3 0.5L0.5 2.5L3 4.5Z" fill="#555"/></svg><div style="position:absolute;left:218.5px;top:409px;width:2px;height:2px;background:#5a5f65;border-right:1px solid #fff;border-bottom:1px solid #fff"></div><div style="position:absolute;left:218.5px;top:413px;width:2px;height:2px;background:#5a5f65;border-right:1px solid #fff;border-bottom:1px solid #fff"></div><div style="position:absolute;left:218.5px;top:417px;width:2px;height:2px;background:#5a5f65;border-right:1px solid #fff;border-bottom:1px solid #fff"></div><div style="position:absolute;left:218.5px;top:421px;width:2px;height:2px;background:#5a5f65;border-right:1px solid #fff;border-bottom:1px solid #fff"></div><div style="position:absolute;left:218.5px;top:425px;width:2px;height:2px;background:#5a5f65;border-right:1px solid #fff;border-bottom:1px solid #fff"></div><svg style="left:890px;top:401px;" width="4" height="5" viewBox="0 0 4 5"><path d="M0.5 0.5L3 2.5L0.5 4.5Z" fill="#555"/></svg><div style="position:absolute;left:890.5px;top:409px;width:2px;height:2px;background:#5a5f65;border-right:1px solid #fff;border-bottom:1px solid #fff"></div><div style="position:absolute;left:890.5px;top:413px;width:2px;height:2px;background:#5a5f65;border-right:1px solid #fff;border-bottom:1px solid #fff"></div><div style="position:absolute;left:890.5px;top:417px;width:2px;height:2px;background:#5a5f65;border-right:1px solid #fff;border-bottom:1px solid #fff"></div><div style="position:absolute;left:890.5px;top:421px;width:2px;height:2px;background:#5a5f65;border-right:1px solid #fff;border-bottom:1px solid #fff"></div><div style="position:absolute;left:890.5px;top:425px;width:2px;height:2px;background:#5a5f65;border-right:1px solid #fff;border-bottom:1px solid #fff"></div><div style="position:absolute;left:222px;top:116px;width:2px;height:606px;background:#8a8a8a"></div><div style="position:absolute;left:896px;top:116px;width:279px;height:606px;background:#f0f0f0"></div><div style="position:absolute;left:899px;top:120px;width:236px;height:599px;background:#efefef;border:1px solid #e2e2e2"></div><div style="position:absolute;left:909.5px;top:129.7px;font-size:11.9px;color:#000;white-space:nowrap;line-height:1;font-family:'Liberation Sans', sans-serif;font-weight:bold;font-style:normal;letter-spacing:0px;transform-origin:0 0;transform:scaleX(0.9859);">Properties</div><svg style="left:1121px;top:128px;" width="9" height="9" viewBox="0 0 9 9"><path d="M1 1L8 8M8 1L1 8" stroke="#4a5560" stroke-width="1.6"/></svg><div style="position:absolute;left:900px;top:147px;width:234px;height:27px;background:linear-gradient(#e3e3e3,#efefef)"></div><svg style="left:905px;top:156px;" width="9" height="9" viewBox="0 0 9 9"><rect x="0.5" y="0.5" width="8" height="8" fill="#fff" stroke="#54606c"/><path d="M2 4.5H7M4.5 2V7" stroke="#222"/></svg><div style="position:absolute;left:918.6px;top:156.6px;font-size:11.9px;color:#000;white-space:nowrap;line-height:1;font-family:'Liberation Sans', sans-serif;font-weight:bold;font-style:normal;letter-spacing:0px;transform-origin:0 0;transform:scaleX(1.0815);">Text</div><svg style="left:1118px;top:153px;" width="12" height="11" viewBox="0 0 12 11"><rect x="0.5" y="0.5" width="11" height="10" fill="#fff" stroke="#3a62b0"/><rect x="0.5" y="0.5" width="11" height="2.5" fill="#7aa0dd"/><path d="M3 7H4M5.5 7H6.5M8 7H9" stroke="#1a2a6a" stroke-width="1.1"/></svg><div style="position:absolute;left:900px;top:174px;width:234px;height:27px;background:linear-gradient(#e3e3e3,#efefef)"></div><svg style="left:905px;top:183px;" width="9" height="9" viewBox="0 0 9 9"><rect x="0.5" y="0.5" width="8" height="8" fill="#fff" stroke="#54606c"/><path d="M2 4.5H7M4.5 2V7" stroke="#222"/></svg><div style="position:absolute;left:918.6px;top:183.6px;font-size:11.9px;color:#000;white-space:nowrap;line-height:1;font-family:'Liberation Sans', sans-serif;font-weight:bold;font-style:normal;letter-spacing:0px;transform-origin:0 0;transform:scaleX(0.9519);">Paragraph</div><svg style="left:1118px;top:180px;" width="12" height="11" viewBox="0 0 12 11"><rect x="0.5" y="0.5" width="11" height="10" fill="#fff" stroke="#3a62b0"/><rect x="0.5" y="0.5" width="11" height="2.5" fill="#7aa0dd"/><path d="M3 7H4M5.5 7H6.5M8 7H9" stroke="#1a2a6a" stroke-width="1.1"/></svg><div style="position:absolute;left:900px;top:201px;width:234px;height:27px;background:linear-gradient(#e3e3e3,#efefef)"></div><svg style="left:905px;top:210px;" width="9" height="9" viewBox="0 0 9 9"><rect x="0.5" y="0.5" width="8" height="8" fill="#fff" stroke="#54606c"/><path d="M2 4.5H7" stroke="#222"/></svg><div style="position:absolute;left:918.6px;top:210.6px;font-size:11.9px;color:#000;white-space:nowrap;line-height:1;font-family:'Liberation Sans', sans-serif;font-weight:bold;font-style:normal;letter-spacing:0px;transform-origin:0 0;transform:scaleX(0.9602);">Area</div><svg style="left:1118px;top:207px;" width="12" height="11" viewBox="0 0 12 11"><rect x="0.5" y="0.5" width="11" height="10" fill="#fff" stroke="#3a62b0"/><rect x="0.5" y="0.5" width="11" height="2.5" fill="#7aa0dd"/><path d="M3 7H4M5.5 7H6.5M8 7H9" stroke="#1a2a6a" stroke-width="1.1"/></svg><div style="position:absolute;left:900px;top:335px;width:234px;height:27px;background:linear-gradient(#e3e3e3,#efefef)"></div><svg style="left:905px;top:344px;" width="9" height="9" viewBox="0 0 9 9"><rect x="0.5" y="0.5" width="8" height="8" fill="#fff" stroke="#54606c"/><path d="M2 4.5H7" stroke="#222"/></svg><div style="position:absolute;left:918.6px;top:344.6px;font-size:11.9px;color:#000;white-space:nowrap;line-height:1;font-family:'Liberation Sans', sans-serif;font-weight:bold;font-style:normal;letter-spacing:0px;transform-origin:0 0;transform:scaleX(0.9406);">Line</div><svg style="left:1118px;top:341px;" width="12" height="11" viewBox="0 0 12 11"><rect x="0.5" y="0.5" width="11" height="10" fill="#fff" stroke="#3a62b0"/><rect x="0.5" y="0.5" width="11" height="2.5" fill="#7aa0dd"/><path d="M3 7H4M5.5 7H6.5M8 7H9" stroke="#1a2a6a" stroke-width="1.1"/></svg><div style="position:absolute;left:900px;top:578px;width:234px;height:27px;background:linear-gradient(#e3e3e3,#efefef)"></div><svg style="left:905px;top:587px;" width="9" height="9" viewBox="0 0 9 9"><rect x="0.5" y="0.5" width="8" height="8" fill="#fff" stroke="#54606c"/><path d="M2 4.5H7M4.5 2V7" stroke="#222"/></svg><div style="position:absolute;left:918.6px;top:587.6px;font-size:11.9px;color:#000;white-space:nowrap;line-height:1;font-family:'Liberation Sans', sans-serif;font-weight:bold;font-style:normal;letter-spacing:0px;transform-origin:0 0;transform:scaleX(0.9446);">Position and Size</div><svg style="left:1118px;top:584px;" width="12" height="11" viewBox="0 0 12 11"><rect x="0.5" y="0.5" width="11" height="10" fill="#fff" stroke="#3a62b0"/><rect x="0.5" y="0.5" width="11" height="2.5" fill="#7aa0dd"/><path d="M3 7H4M5.5 7H6.5M8 7H9" stroke="#1a2a6a" stroke-width="1.1"/></svg><div style="position:absolute;left:900px;top:605px;width:234px;height:1px;background:#e2e2e2"></div><div style="position:absolute;left:906px;top:233.29999999999998px;font-size:12.3px;color:#000;white-space:nowrap;line-height:1;font-family:'Liberation Sans', sans-serif;font-weight:normal;font-style:normal;letter-spacing:0px;transform-origin:0 0;transform:scaleX(0.9509);"><u>F</u>ill:</div><div style="position:absolute;left:906px;top:251px;width:108px;height:23px;background:#fff;border:1px solid #7d848e;box-shadow:inset 0 0 0 1px #d6d9dd"></div><div style="position:absolute;left:997px;top:252px;width:16px;height:21px;background:linear-gradient(#f3f3f3,#dadada);border:1px solid #b4b4b4;border-right:none"></div><svg style="left:1000.5px;top:260.0px;" width="9" height="6" viewBox="0 0 9 6"><path d="M1 1L4.5 4.8L8 1" stroke="#4a4a4a" stroke-width="2.1" fill="none"/></svg><div style="position:absolute;left:908.5px;top:256.4px;font-size:12.3px;color:#000;white-space:nowrap;line-height:1;font-family:'Liberation Sans', sans-serif;font-weight:normal;font-style:normal;letter-spacing:0px;transform-origin:0 0;transform:scaleX(0.9697);">Color</div><div style="position:absolute;left:1020px;top:249px;width:100px;height:26px;background:#f8f8f8;border:1px solid #e4e4e4"></div><svg style="left:1028px;top:255px;" width="15" height="14" viewBox="0 0 15 14"><path d="M2 6L7 1L12 7L7 12Z" fill="#cfe2f6" stroke="#2a4a7a" stroke-width="1.1"/><path d="M7 1V7" stroke="#2a4a7a"/><path d="M11 5Q15 7 14 12" stroke="#222" stroke-width="1.5" fill="none"/></svg><div style="position:absolute;left:1045px;top:256px;width:56px;height:12px;background:#ff9412;border:1px solid #3a5a8a"></div><svg style="left:1108px;top:261px;" width="6" height="4" viewBox="0 0 6 4"><path d="M0 0H6L3 3.5Z" fill="#111"/></svg><div style="position:absolute;left:906px;top:285.1px;font-size:12.3px;color:#000;white-space:nowrap;line-height:1;font-family:'Liberation Sans', sans-serif;font-weight:normal;font-style:normal;letter-spacing:0px;transform-origin:0 0;transform:scaleX(0.9468);"><u>T</u>ransparency:</div><div style="position:absolute;left:906px;top:303px;width:108px;height:23px;background:#fff;border:1px solid #7d848e;box-shadow:inset 0 0 0 1px #d6d9dd"></div><div style="position:absolute;left:997px;top:304px;width:16px;height:21px;background:linear-gradient(#f3f3f3,#dadada);border:1px solid #b4b4b4;border-right:none"></div><svg style="left:1000.5px;top:312.0px;" width="9" height="6" viewBox="0 0 9 6"><path d="M1 1L4.5 4.8L8 1" stroke="#4a4a4a" stroke-width="2.1" fill="none"/></svg><div style="position:absolute;left:908.5px;top:308.4px;font-size:12.3px;color:#000;white-space:nowrap;line-height:1;font-family:'Liberation Sans', sans-serif;font-weight:normal;font-style:normal;letter-spacing:0px;transform-origin:0 0;transform:scaleX(0.9692);">None</div><div style="position:absolute;left:1020px;top:303px;width:108px;height:23px;background:#fff;border:1px solid #b8bcc2"></div><div style="position:absolute;left:1110px;top:305px;width:16px;height:19px;background:#ececec;border:1px solid #c0c0c0"></div><div style="position:absolute;left:1112px;top:314px;width:12px;height:1px;background:#bbb"></div><svg style="left:1114px;top:307px;" width="8" height="5" viewBox="0 0 8 5"><path d="M0.5 4.5L4 0.5L7.5 4.5Z" fill="#222"/></svg><svg style="left:1114px;top:317px;" width="8" height="5" viewBox="0 0 8 5"><path d="M0.5 0.5L4 4.5L7.5 0.5Z" fill="#222"/></svg><div style="position:absolute;left:1023px;top:308.4px;font-size:12.3px;color:#000;white-space:nowrap;line-height:1;font-family:'Liberation Sans', sans-serif;font-weight:normal;font-style:normal;letter-spacing:0px;transform-origin:0 0;transform:scaleX(0.8998);">0%</div><div style="position:absolute;left:906px;top:366.20000000000005px;font-size:12.3px;color:#000;white-space:nowrap;line-height:1;font-family:'Liberation Sans', sans-serif;font-weight:normal;font-style:normal;letter-spacing:0px;transform-origin:0 0;transform:scaleX(0.9753);"><u>W</u>idth:</div><div style="position:absolute;left:1020px;top:366.20000000000005px;font-size:12.3px;color:#000;white-space:nowrap;line-height:1;font-family:'Liberation Sans', sans-serif;font-weight:normal;font-style:normal;letter-spacing:0px;transform-origin:0 0;transform:scaleX(0.9600);"><u>C</u>olor:</div><div style="position:absolute;left:906px;top:381px;width:100px;height:27px;background:linear-gradient(#f4f4f4,#fafafa);border:1px solid #e4e4e4"></div><div style="position:absolute;left:911px;top:393px;width:76px;height:1px;background:#000"></div><svg style="left:996px;top:392px;" width="6" height="4" viewBox="0 0 6 4"><path d="M0 0H6L3 3.5Z" fill="#111"/></svg><div style="position:absolute;left:1020px;top:381px;width:100px;height:27px;background:linear-gradient(#f4f4f4,#fafafa);border:1px solid #e4e4e4"></div><svg style="left:1025px;top:387px;" width="16" height="14" viewBox="0 0 16 14"><path d="M1 11L9 2L12 5L4 13L1 13Z" fill="#f3c232" stroke="#8a5a10" stroke-width="0.9"/><path d="M7 13H15" stroke="#2a4a8a" stroke-width="1.5"/></svg><div style="position:absolute;left:1045px;top:387px;width:56px;height:14px;background:#7f7f7f;border:1px solid #3a5a8a;box-shadow:inset 0 0 0 1px #fff"></div><svg style="left:1108px;top:392px;" width="6" height="4" viewBox="0 0 6 4"><path d="M0 0H6L3 3.5Z" fill="#111"/></svg><div style="position:absolute;left:906px;top:420.1px;font-size:12.3px;color:#000;white-space:nowrap;line-height:1;font-family:'Liberation Sans', sans-serif;font-weight:normal;font-style:normal;letter-spacing:0px;transform-origin:0 0;transform:scaleX(0.9101);"><u>S</u>tyle:</div><div style="position:absolute;left:1020px;top:420.1px;font-size:12.3px;color:#000;white-space:nowrap;line-height:1;font-family:'Liberation Sans', sans-serif;font-weight:normal;font-style:normal;letter-spacing:0px;transform-origin:0 0;transform:scaleX(0.9468);"><u>T</u>ransparency:</div><div style="position:absolute;left:906px;top:437px;width:108px;height:23px;background:#fff;border:1px solid #7d848e;box-shadow:inset 0 0 0 1px #d6d9dd"></div><div style="position:absolute;left:997px;top:438px;width:16px;height:21px;background:linear-gradient(#f3f3f3,#dadada);border:1px solid #b4b4b4;border-right:none"></div><svg style="left:1000.5px;top:446.0px;" width="9" height="6" viewBox="0 0 9 6"><path d="M1 1L4.5 4.8L8 1" stroke="#4a4a4a" stroke-width="2.1" fill="none"/></svg><div style="position:absolute;left:907.8px;top:442.4px;font-size:12.3px;color:#000;white-space:nowrap;line-height:1;font-family:'Liberation Sans', sans-serif;font-weight:normal;font-style:normal;letter-spacing:0px;transform-origin:0 0;transform:scaleX(1.0073);">- none -</div><div style="position:absolute;left:1020px;top:437px;width:108px;height:23px;background:#fff;border:1px solid #b8bcc2"></div><div style="position:absolute;left:1110px;top:439px;width:16px;height:19px;background:#ececec;border:1px solid #c0c0c0"></div><div style="position:absolute;left:1112px;top:448px;width:12px;height:1px;background:#bbb"></div><svg style="left:1114px;top:441px;" width="8" height="5" viewBox="0 0 8 5"><path d="M0.5 4.5L4 0.5L7.5 4.5Z" fill="#222"/></svg><svg style="left:1114px;top:451px;" width="8" height="5" viewBox="0 0 8 5"><path d="M0.5 0.5L4 4.5L7.5 0.5Z" fill="#222"/></svg><div style="position:absolute;left:1023px;top:442.4px;font-size:12.3px;color:#000;white-space:nowrap;line-height:1;font-family:'Liberation Sans', sans-serif;font-weight:normal;font-style:normal;letter-spacing:0px;transform-origin:0 0;transform:scaleX(0.8998);">0%</div><div style="position:absolute;left:906px;top:475.40000000000003px;font-size:12.3px;color:#000;white-space:nowrap;line-height:1;font-family:'Liberation Sans', sans-serif;font-weight:normal;font-style:normal;letter-spacing:0px;transform-origin:0 0;transform:scaleX(0.9710);"><u>A</u>rrow:</div><div style="position:absolute;left:906px;top:491px;width:108px;height:23px;background:#fff;border:1px solid #7d848e;box-shadow:inset 0 0 0 1px #d6d9dd"></div><div style="position:absolute;left:997px;top:492px;width:16px;height:21px;background:linear-gradient(#f3f3f3,#dadada);border:1px solid #b4b4b4;border-right:none"></div><svg style="left:1000.5px;top:500.0px;" width="9" height="6" viewBox="0 0 9 6"><path d="M1 1L4.5 4.8L8 1" stroke="#4a4a4a" stroke-width="2.1" fill="none"/></svg><div style="position:absolute;left:907.8px;top:496.4px;font-size:12.3px;color:#000;white-space:nowrap;line-height:1;font-family:'Liberation Sans', sans-serif;font-weight:normal;font-style:normal;letter-spacing:0px;transform-origin:0 0;transform:scaleX(1.0073);">- none -</div><div style="position:absolute;left:1020px;top:491px;width:108px;height:23px;background:#fff;border:1px solid #7d848e;box-shadow:inset 0 0 0 1px #d6d9dd"></div><div style="position:absolute;left:1111px;top:492px;width:16px;height:21px;background:linear-gradient(#f3f3f3,#dadada);border:1px solid #b4b4b4;border-right:none"></div><svg style="left:1114.5px;top:500.0px;" width="9" height="6" viewBox="0 0 9 6"><path d="M1 1L4.5 4.8L8 1" stroke="#4a4a4a" stroke-width="2.1" fill="none"/></svg><div style="position:absolute;left:1021.8px;top:496.4px;font-size:12.3px;color:#000;white-space:nowrap;line-height:1;font-family:'Liberation Sans', sans-serif;font-weight:normal;font-style:normal;letter-spacing:0px;transform-origin:0 0;transform:scaleX(1.0073);">- none -</div><div style="position:absolute;left:906px;top:529.2px;font-size:12.3px;color:#000;white-space:nowrap;line-height:1;font-family:'Liberation Sans', sans-serif;font-weight:normal;font-style:normal;letter-spacing:0px;transform-origin:0 0;transform:scaleX(0.9500);"><u>C</u>orner style</div><div style="position:absolute;left:1020.7px;top:529.2px;font-size:12.3px;color:#000;white-space:nowrap;line-height:1;font-family:'Liberation Sans', sans-serif;font-weight:normal;font-style:normal;letter-spacing:0px;transform-origin:0 0;transform:scaleX(0.9165);">Ca<u>p</u> style</div><div style="position:absolute;left:906px;top:546px;width:108px;height:23px;background:#fff;border:1px solid #7d848e;box-shadow:inset 0 0 0 1px #d6d9dd"></div><div style="position:absolute;left:997px;top:547px;width:16px;height:21px;background:linear-gradient(#f3f3f3,#dadada);border:1px solid #b4b4b4;border-right:none"></div><svg style="left:1000.5px;top:555.0px;" width="9" height="6" viewBox="0 0 9 6"><path d="M1 1L4.5 4.8L8 1" stroke="#4a4a4a" stroke-width="2.1" fill="none"/></svg><div style="position:absolute;left:907.8px;top:551.4px;font-size:12.3px;color:#000;white-space:nowrap;line-height:1;font-family:'Liberation Sans', sans-serif;font-weight:normal;font-style:normal;letter-spacing:0px;transform-origin:0 0;transform:scaleX(0.9615);">Rounded</div><div style="position:absolute;left:1020px;top:546px;width:108px;height:23px;background:#fff;border:1px solid #7d848e;box-shadow:inset 0 0 0 1px #d6d9dd"></div><div style="position:absolute;left:1111px;top:547px;width:16px;height:21px;background:linear-gradient(#f3f3f3,#dadada);border:1px solid #b4b4b4;border-right:none"></div><svg style="left:1114.5px;top:555.0px;" width="9" height="6" viewBox="0 0 9 6"><path d="M1 1L4.5 4.8L8 1" stroke="#4a4a4a" stroke-width="2.1" fill="none"/></svg><div style="position:absolute;left:1022.3px;top:551.4px;font-size:12.3px;color:#000;white-space:nowrap;line-height:1;font-family:'Liberation Sans', sans-serif;font-weight:normal;font-style:normal;letter-spacing:0px;transform-origin:0 0;transform:scaleX(0.9122);">Flat</div><div style="position:absolute;left:1135px;top:116px;width:40px;height:606px;background:#f0f0f0"></div><div style="position:absolute;left:1173px;top:116px;width:1px;height:606px;background:#a0a0a0"></div><svg style="left:1151px;top:131px;" width="10" height="9" viewBox="0 0 10 9"><path d="M0 1H8M0 3.5H8M0 6H6" stroke="#333" stroke-width="1.2"/><path d="M5 6H10L7.5 9Z" fill="#111"/></svg><div style="position:absolute;left:1144px;top:155px;width:24px;height:1px;background:#dcdcdc"></div><div style="position:absolute;left:1139px;top:159px;width:31px;height:32px;background:#ececec;border:1px solid #b8b8b8;border-radius:3px"></div><div style="position:absolute;left:1146px;top:186px;width:20px;height:4px;background:radial-gradient(ellipse at center, rgba(0,0,0,0.28), rgba(0,0,0,0) 70%)"></div><svg style="left:1144px;top:163px;" width="22" height="22" viewBox="0 0 22 22"><path d="M3 6L11 2L19 6V16L11 20L3 16Z" fill="#2a9ae8"/><path d="M11 10L19 6V16L11 20Z" fill="#6cc832"/><path d="M3 6L11 2L19 6L11 10Z" fill="#8fd8fa"/><path d="M7 4V12L3 10M15 4V12L19 10M11 10V20M3 11L11 15L19 11M7 12L11 14L15 12" stroke="#fff" stroke-width="0.9" fill="none"/><path d="M3 16L11 20L19 16" stroke="#8ad" stroke-width="0.6" fill="none"/></svg><div style="position:absolute;left:1146px;top:222px;width:20px;height:4px;background:radial-gradient(ellipse at center, rgba(0,0,0,0.28), rgba(0,0,0,0) 70%)"></div><svg style="left:1144px;top:199px;" width="22" height="22" viewBox="0 0 22 22"><rect x="1.5" y="1.5" width="19" height="15" fill="#f2f5f8" stroke="#6a737c"/><rect x="3" y="3" width="16" height="2.2" fill="#3a73c0"/><rect x="4.5" y="8" width="3" height="10" fill="#1f64d8"/><rect x="9.5" y="8" width="3" height="10" fill="#f5a623"/><rect x="14.5" y="8" width="3" height="10" fill="#2ec02e"/><path d="M4.5 8L6 6L7.5 8M9.5 8L11 6L12.5 8M14.5 8L16 6L17.5 8" fill="#6a4a2a"/></svg><div style="position:absolute;left:1146px;top:256px;width:20px;height:4px;background:radial-gradient(ellipse at center, rgba(0,0,0,0.28), rgba(0,0,0,0) 70%)"></div><svg style="left:1144px;top:233px;" width="22" height="22" viewBox="0 0 22 22"><path d="M10 1.5L12.8 7.6L19 8.2L14.4 12.4L15.8 19L10 15.6L4.2 19L5.6 12.4L1 8.2L7.2 7.6Z" fill="#f8c440" stroke="#d08a10" stroke-width="1"/><path d="M16 5H21M17 8H21M17 11H21" stroke="#f0a030" stroke-width="1"/></svg><div style="position:absolute;left:1146px;top:291px;width:20px;height:4px;background:radial-gradient(ellipse at center, rgba(0,0,0,0.28), rgba(0,0,0,0) 70%)"></div><svg style="left:1144px;top:268px;" width="22" height="22" viewBox="0 0 22 22"><rect x="6.5" y="1.5" width="14" height="17" fill="#f2f5f8" stroke="#6a737c"/><rect x="9" y="10" width="9" height="6" fill="#6ab0e0"/><path d="M9 16L12 12L15 14L18 11V16Z" fill="#4aa04a"/><rect x="1.5" y="4.5" width="9" height="11" fill="#eef2f6" stroke="#6a737c"/><path d="M3 10H12M9 7L12 10L9 13" stroke="#1f64d8" stroke-width="2.2" fill="none"/></svg><div style="position:absolute;left:1146px;top:325px;width:20px;height:4px;background:radial-gradient(ellipse at center, rgba(0,0,0,0.28), rgba(0,0,0,0) 70%)"></div><svg style="left:1144px;top:302px;" width="22" height="22" viewBox="0 0 22 22"><path d="M2 19L9 6L15 19Z" fill="#1a5ab0"/><path d="M9 6C14 8 17 12 15 19C12 16 11 12 9 6Z" fill="#3ab03a"/><path d="M9 6L4 14" stroke="#b0d8f8" stroke-width="1.2"/><circle cx="5" cy="5" r="2.2" fill="#e84ac8"/><circle cx="12" cy="3" r="2" fill="#a050e0"/><path d="M18 1L19 3.5L21.5 3.8L19.6 5.4L20.2 8L18 6.6L15.8 8L16.4 5.4L14.5 3.8L17 3.5Z" fill="#f8c84a"/><circle cx="19" cy="12" r="2" fill="#e84a6a"/></svg><div style="position:absolute;left:1146px;top:359px;width:20px;height:4px;background:radial-gradient(ellipse at center, rgba(0,0,0,0.28), rgba(0,0,0,0) 70%)"></div><svg style="left:1144px;top:336px;" width="22" height="22" viewBox="0 0 22 22"><path d="M1.5 7L16 2L20.5 14L6 19Z" fill="#f2f5f8" stroke="#6a737c"/><path d="M4.5 8.5L15 5L18 13L7.5 16.5Z" fill="#8ad0f0"/><path d="M7.5 16.5L11 11L14 13L18 13Z" fill="#4aa84a"/><circle cx="9" cy="9" r="1.5" fill="#fff"/></svg><div style="position:absolute;left:1146px;top:393px;width:20px;height:4px;background:radial-gradient(ellipse at center, rgba(0,0,0,0.28), rgba(0,0,0,0) 70%)"></div><svg style="left:1144px;top:370px;" width="22" height="22" viewBox="0 0 22 22"><circle cx="11" cy="11" r="9.5" fill="#fff" stroke="#f0a020" stroke-width="2.6"/><path d="M15 6L10 10.5L12 12.5Z" fill="#e23030"/><path d="M7 16L10 10.5L12 12.5Z" fill="#3a73c0"/><text x="11" y="6.5" font-size="5" font-family="Liberation Sans" font-weight="bold" fill="#333" text-anchor="middle">N</text></svg><div style="position:absolute;left:21px;top:264px;width:166px;height:112px;background:#a6c7ea;border:1px solid #7ea3cf"></div><div style="left:13px;top:142px;width:183px;height:576px;overflow:hidden"><div style="left:-13px;top:-142px;width:300px;height:800px"><div style="left:46px;top:146px;width:137px;height:104px;border:1px solid #8e8e8e;background:#dcdcdc;box-shadow:1px 1px 2px rgba(0,0,0,0.3)"></div><div style="left:48px;top:148px;width:627px;height:470px;transform-origin:0 0;transform:scale(0.21212121212121213);box-shadow:none;overflow:hidden"><svg style="left:0;top:0" width="627" height="470"><defs><pattern id="pb" width="15.5" height="15.5" patternUnits="userSpaceOnUse" x="-5.5" y="-0.3"><rect width="15.5" height="15.5" fill="#564330"/><path d="M0 0L15.5 15.5M15.5 0L0 15.5" stroke="#3c2c1a" stroke-width="0.8" opacity="0.7"/><path d="M1.2 7.75Q3.5 2.6 7.75 1.6Q12 2.6 14.3 7.75Q12 12.9 7.75 13.9Q3.5 12.9 1.2 7.75Z" fill="#604c36" stroke="#3a2a18" stroke-width="1"/><circle cx="0" cy="7.75" r="1.1" fill="#6a563e"/><circle cx="15.5" cy="7.75" r="1.1" fill="#6a563e"/></pattern></defs><rect width="627" height="470" fill="url(#pb)"/><rect x="14" y="14" width="599" height="439" fill="#e3ca68" stroke="#3a2a12" stroke-width="1.4" stroke-dasharray="1.6 1.6"/><rect x="15.5" y="15.5" width="596" height="436" fill="#e8d27c"/><rect x="17" y="17" width="593" height="431" fill="none" stroke="#d8bf60" stroke-width="1" opacity="0.6"/></svg><div style="left:19px;top:20px;width:590px;height:429px;background:#f0f0f0;box-shadow:inset 0 0 44px 10px rgba(238,214,118,0.72), inset 0 0 5px 2px rgba(228,204,108,0.7)"></div><svg style="left:0;top:0" width="627" height="470"><path d="M80 28H547M29 86V439H598V86" fill="none" stroke="#cdc8b4" stroke-width="1"/><rect x="29" y="122" width="569" height="3" fill="#d9d2b6"/><g transform="translate(21,20)"><g fill="none" stroke="#cbc7b3" stroke-width="1.15"><ellipse cx="58" cy="25" rx="6.5" ry="12.5" transform="rotate(12 58 25)"/><path d="M52 23Q66 18 82 16"/><path d="M72 8.7Q58 9 51 21"/><path d="M8 13C9 6 16 8 15 16C14 21 9 22 10 27"/><path d="M19 27C16 18 22 8 29 9C36 10 39 18 37 27"/><path d="M13 27.5H51M16 34H47"/><path d="M25 27V55M32.6 22V54M37.7 25V50"/><circle cx="44" cy="39" r="5"/><circle cx="40" cy="48" r="3.8"/><ellipse cx="16" cy="30" rx="8" ry="10"/><ellipse cx="23" cy="58" rx="11.5" ry="10.5"/><path d="M19 59Q19 80 28 95" stroke-width="1"/><path d="M8 86V66C8 58 12 52 18 50"/></g></g><g transform="translate(627,0) scale(-1,1)"><g transform="translate(21,20)"><g fill="none" stroke="#cbc7b3" stroke-width="1.15"><ellipse cx="58" cy="25" rx="6.5" ry="12.5" transform="rotate(12 58 25)"/><path d="M52 23Q66 18 82 16"/><path d="M72 8.7Q58 9 51 21"/><path d="M8 13C9 6 16 8 15 16C14 21 9 22 10 27"/><path d="M19 27C16 18 22 8 29 9C36 10 39 18 37 27"/><path d="M13 27.5H51M16 34H47"/><path d="M25 27V55M32.6 22V54M37.7 25V50"/><circle cx="44" cy="39" r="5"/><circle cx="40" cy="48" r="3.8"/><ellipse cx="16" cy="30" rx="8" ry="10"/><ellipse cx="23" cy="58" rx="11.5" ry="10.5"/><path d="M19 59Q19 80 28 95" stroke-width="1"/><path d="M8 86V66C8 58 12 52 18 50"/></g></g></g></svg><div style="position:absolute;left:163.5px;top:57.6479px;font-size:39.4px;color:#a0533a;white-space:nowrap;line-height:1;font-family:'Liberation Sans', sans-serif;font-weight:normal;font-style:normal;letter-spacing:2px;transform-origin:0 0;transform:scaleX(0.9119);">Sensory Memory</div><div style="left:62px;top:238px;width:9px;height:9px;background:#d8a830"></div><div style="left:88px;top:231px;font-size:21px;line-height:1;font-weight:bold;color:#3a2612;letter-spacing:0.5px;text-shadow:1px 0 0 #3a2612;white-space:nowrap;transform-origin:0 0;transform:scaleX(0.862)">Attention is the filter (and why we select)</div><div style="left:62px;top:280px;width:9px;height:9px;background:#d8a830"></div><div style="left:88px;top:273px;font-size:21px;line-height:1;font-weight:bold;color:#3a2612;letter-spacing:0.5px;text-shadow:1px 0 0 #3a2612;white-space:nowrap;transform-origin:0 0;transform:scaleX(0.836)">Iconic Memory -</div><div style="left:62px;top:320px;width:9px;height:9px;background:#d8a830"></div><div style="left:88px;top:313px;font-size:21px;line-height:1;font-weight:bold;color:#3a2612;letter-spacing:0.5px;text-shadow:1px 0 0 #3a2612;white-space:nowrap;transform-origin:0 0;transform:scaleX(0.836)">Echoic Memory -</div></div><div style="position:absolute;left:29px;top:145px;font-size:13px;color:#6a6a6a;white-space:nowrap;line-height:1;font-family:'Liberation Sans', sans-serif;font-weight:bold;font-style:normal;letter-spacing:0px;transform-origin:0 0;transform:scaleX(0.7948);">10</div><div style="left:46px;top:268px;width:137px;height:104px;border:1px solid #8e8e8e;background:#dcdcdc;box-shadow:1px 1px 2px rgba(0,0,0,0.3)"></div><div style="left:48px;top:270px;width:627px;height:470px;transform-origin:0 0;transform:scale(0.21212121212121213);box-shadow:none;overflow:hidden"><svg style="left:0;top:0" width="627" height="470"><defs><pattern id="pb" width="15.5" height="15.5" patternUnits="userSpaceOnUse" x="-5.5" y="-0.3"><rect width="15.5" height="15.5" fill="#564330"/><path d="M0 0L15.5 15.5M15.5 0L0 15.5" stroke="#3c2c1a" stroke-width="0.8" opacity="0.7"/><path d="M1.2 7.75Q3.5 2.6 7.75 1.6Q12 2.6 14.3 7.75Q12 12.9 7.75 13.9Q3.5 12.9 1.2 7.75Z" fill="#604c36" stroke="#3a2a18" stroke-width="1"/><circle cx="0" cy="7.75" r="1.1" fill="#6a563e"/><circle cx="15.5" cy="7.75" r="1.1" fill="#6a563e"/></pattern></defs><rect width="627" height="470" fill="url(#pb)"/><rect x="14" y="14" width="599" height="439" fill="#e3ca68" stroke="#3a2a12" stroke-width="1.4" stroke-dasharray="1.6 1.6"/><rect x="15.5" y="15.5" width="596" height="436" fill="#e8d27c"/><rect x="17" y="17" width="593" height="431" fill="none" stroke="#d8bf60" stroke-width="1" opacity="0.6"/></svg><div style="left:19px;top:20px;width:590px;height:429px;background:#f0f0f0;box-shadow:inset 0 0 44px 10px rgba(238,214,118,0.72), inset 0 0 5px 2px rgba(228,204,108,0.7)"></div><svg style="left:0;top:0" width="627" height="470"><path d="M80 28H547M29 86V439H598V86" fill="none" stroke="#cdc8b4" stroke-width="1"/><rect x="29" y="122" width="569" height="3" fill="#d9d2b6"/><g transform="translate(21,20)"><g fill="none" stroke="#cbc7b3" stroke-width="1.15"><ellipse cx="58" cy="25" rx="6.5" ry="12.5" transform="rotate(12 58 25)"/><path d="M52 23Q66 18 82 16"/><path d="M72 8.7Q58 9 51 21"/><path d="M8 13C9 6 16 8 15 16C14 21 9 22 10 27"/><path d="M19 27C16 18 22 8 29 9C36 10 39 18 37 27"/><path d="M13 27.5H51M16 34H47"/><path d="M25 27V55M32.6 22V54M37.7 25V50"/><circle cx="44" cy="39" r="5"/><circle cx="40" cy="48" r="3.8"/><ellipse cx="16" cy="30" rx="8" ry="10"/><ellipse cx="23" cy="58" rx="11.5" ry="10.5"/><path d="M19 59Q19 80 28 95" stroke-width="1"/><path d="M8 86V66C8 58 12 52 18 50"/></g></g><g transform="translate(627,0) scale(-1,1)"><g transform="translate(21,20)"><g fill="none" stroke="#cbc7b3" stroke-width="1.15"><ellipse cx="58" cy="25" rx="6.5" ry="12.5" transform="rotate(12 58 25)"/><path d="M52 23Q66 18 82 16"/><path d="M72 8.7Q58 9 51 21"/><path d="M8 13C9 6 16 8 15 16C14 21 9 22 10 27"/><path d="M19 27C16 18 22 8 29 9C36 10 39 18 37 27"/><path d="M13 27.5H51M16 34H47"/><path d="M25 27V55M32.6 22V54M37.7 25V50"/><circle cx="44" cy="39" r="5"/><circle cx="40" cy="48" r="3.8"/><ellipse cx="16" cy="30" rx="8" ry="10"/><ellipse cx="23" cy="58" rx="11.5" ry="10.5"/><path d="M19 59Q19 80 28 95" stroke-width="1"/><path d="M8 86V66C8 58 12 52 18 50"/></g></g></g></svg><div style="position:absolute;left:121.5px;top:57.6479px;font-size:39.4px;color:#a0533a;white-space:nowrap;line-height:1;font-family:'Liberation Sans', sans-serif;font-weight:normal;font-style:normal;letter-spacing:2px;transform-origin:0 0;transform:scaleX(1.0205);">A model of Memory</div><div style="position:absolute;left:56px;top:245.31px;font-size:13.6px;color:#5e4526;white-space:nowrap;line-height:1;font-family:'Liberation Serif', serif;font-weight:normal;font-style:italic;letter-spacing:0.4px;transform-origin:0 0;transform:scaleX(1.0082);">Sensory Input</div><div style="position:absolute;left:215px;top:256.51px;font-size:13.6px;color:#5e4526;white-space:nowrap;line-height:1;font-family:'Liberation Serif', serif;font-weight:normal;font-style:italic;letter-spacing:0.4px;transform-origin:0 0;transform:scaleX(0.9918);">Attention</div><div style="position:absolute;left:304.70000000000005px;top:199.41000000000003px;font-size:13.6px;color:#5e4526;white-space:nowrap;line-height:1;font-family:'Liberation Serif', serif;font-weight:normal;font-style:italic;letter-spacing:0.4px;transform-origin:0 0;transform:scaleX(0.9929);">Rehearsal</div><div style="position:absolute;left:389px;top:245.01px;font-size:13.6px;color:#5e4526;white-space:nowrap;line-height:1;font-family:'Liberation Serif', serif;font-weight:normal;font-style:italic;letter-spacing:0.4px;transform-origin:0 0;transform:scaleX(0.9979);">Storage</div><div style="position:absolute;left:402.6px;top:302.41px;font-size:13.6px;color:#5e4526;white-space:nowrap;line-height:1;font-family:'Liberation Serif', serif;font-weight:normal;font-style:italic;letter-spacing:0.4px;transform-origin:0 0;transform:scaleX(0.9865);">Retrieval</div><svg style="left:0;top:0" width="627" height="470"><path d="M56.0 281.0L123.0 281.8L119.9 285.8L137.0 279.5L120.1 272.8L123.0 276.8L56.0 276.0Z" fill="#000"/><path d="M211.0 281.5L271.0 281.5L268.0 285.5L285.0 279.0L268.0 272.5L271.0 276.5L211.0 276.5Z" fill="#000"/><path d="M377.0 264.5L443.0 264.5L440.0 268.5L457.0 262.0L440.0 255.5L443.0 259.5L377.0 259.5Z" fill="#000"/><path d="M458.0 296.5L400.0 295.7L403.1 291.7L386.0 298.0L402.9 304.7L400.0 300.7L458.0 301.5Z" fill="#000"/><path d="M328.0 215.0L320.1 230.2L318.6 226.0L317.0 241.0L328.3 231.1L324.1 232.3L332.0 217.0Z" fill="#000"/><path d="M360.0 240.1L353.6 226.1L357.8 227.4L347.0 217.0L347.8 232.0L349.5 227.9L356.0 241.9Z" fill="#000"/></svg><div style="left:148px;top:249px;width:61px;height:61px;background:#4b0082;border-radius:8px"></div><div style="left:294px;top:243px;width:80px;height:73px;background:#ff9412;border-radius:0px"></div><div style="left:462px;top:233px;width:98px;height:93px;background:#007d0f;border-radius:11px"></div><div style="position:absolute;left:155px;top:267.6885px;font-size:11px;color:#fff;white-space:nowrap;line-height:1;font-family:'Liberation Sans', sans-serif;font-weight:bold;font-style:normal;letter-spacing:1px;transform-origin:0 0;transform:scaleX(0.9520);text-shadow:1px 1px 0 #000;">Sensory</div><div style="position:absolute;left:156px;top:280.1885px;font-size:11px;color:#fff;white-space:nowrap;line-height:1;font-family:'Liberation Sans', sans-serif;font-weight:bold;font-style:normal;letter-spacing:1px;transform-origin:0 0;transform:scaleX(0.9632);text-shadow:1px 1px 0 #000;">memory</div><div style="position:absolute;left:301.4px;top:268.2885px;font-size:11px;color:#fff;white-space:nowrap;line-height:1;font-family:'Liberation Sans', sans-serif;font-weight:bold;font-style:normal;letter-spacing:1px;transform-origin:0 0;transform:scaleX(0.9512);text-shadow:1px 1px 0 #000;">Short-term</div><div style="position:absolute;left:309.70000000000005px;top:280.6885px;font-size:11px;color:#fff;white-space:nowrap;line-height:1;font-family:'Liberation Sans', sans-serif;font-weight:bold;font-style:normal;letter-spacing:1px;transform-origin:0 0;transform:scaleX(1.0001);text-shadow:1px 1px 0 #000;">memory</div><div style="position:absolute;left:480.29999999999995px;top:267.9885px;font-size:11px;color:#fff;white-space:nowrap;line-height:1;font-family:'Liberation Sans', sans-serif;font-weight:bold;font-style:normal;letter-spacing:1px;transform-origin:0 0;transform:scaleX(0.9386);text-shadow:1px 1px 0 #000;">Long-term</div><div style="position:absolute;left:486.29999999999995px;top:280.1885px;font-size:11px;color:#fff;white-space:nowrap;line-height:1;font-family:'Liberation Sans', sans-serif;font-weight:bold;font-style:normal;letter-spacing:1px;transform-origin:0 0;transform:scaleX(1.0083);text-shadow:1px 1px 0 #000;">memory</div></div><div style="position:absolute;left:29px;top:267px;font-size:13px;color:#3a3a3a;white-space:nowrap;line-height:1;font-family:'Liberation Sans', sans-serif;font-weight:bold;font-style:normal;letter-spacing:0px;transform-origin:0 0;transform:scaleX(0.8364);">11</div><div style="left:46px;top:390px;width:137px;height:104px;border:1px solid #8e8e8e;background:#dcdcdc;box-shadow:1px 1px 2px rgba(0,0,0,0.3)"></div><div style="left:48px;top:392px;width:627px;height:470px;transform-origin:0 0;transform:scale(0.21212121212121213);box-shadow:none;overflow:hidden"><svg style="left:0;top:0" width="627" height="470"><defs><pattern id="pb" width="15.5" height="15.5" patternUnits="userSpaceOnUse" x="-5.5" y="-0.3"><rect width="15.5" height="15.5" fill="#564330"/><path d="M0 0L15.5 15.5M15.5 0L0 15.5" stroke="#3c2c1a" stroke-width="0.8" opacity="0.7"/><path d="M1.2 7.75Q3.5 2.6 7.75 1.6Q12 2.6 14.3 7.75Q12 12.9 7.75 13.9Q3.5 12.9 1.2 7.75Z" fill="#604c36" stroke="#3a2a18" stroke-width="1"/><circle cx="0" cy="7.75" r="1.1" fill="#6a563e"/><circle cx="15.5" cy="7.75" r="1.1" fill="#6a563e"/></pattern></defs><rect width="627" height="470" fill="url(#pb)"/><rect x="14" y="14" width="599" height="439" fill="#e3ca68" stroke="#3a2a12" stroke-width="1.4" stroke-dasharray="1.6 1.6"/><rect x="15.5" y="15.5" width="596" height="436" fill="#e8d27c"/><rect x="17" y="17" width="593" height="431" fill="none" stroke="#d8bf60" stroke-width="1" opacity="0.6"/></svg><div style="left:19px;top:20px;width:590px;height:429px;background:#f0f0f0;box-shadow:inset 0 0 44px 10px rgba(238,214,118,0.72), inset 0 0 5px 2px rgba(228,204,108,0.7)"></div><svg style="left:0;top:0" width="627" height="470"><path d="M80 28H547M29 86V439H598V86" fill="none" stroke="#cdc8b4" stroke-width="1"/><rect x="29" y="122" width="569" height="3" fill="#d9d2b6"/><g transform="translate(21,20)"><g fill="none" stroke="#cbc7b3" stroke-width="1.15"><ellipse cx="58" cy="25" rx="6.5" ry="12.5" transform="rotate(12 58 25)"/><path d="M52 23Q66 18 82 16"/><path d="M72 8.7Q58 9 51 21"/><path d="M8 13C9 6 16 8 15 16C14 21 9 22 10 27"/><path d="M19 27C16 18 22 8 29 9C36 10 39 18 37 27"/><path d="M13 27.5H51M16 34H47"/><path d="M25 27V55M32.6 22V54M37.7 25V50"/><circle cx="44" cy="39" r="5"/><circle cx="40" cy="48" r="3.8"/><ellipse cx="16" cy="30" rx="8" ry="10"/><ellipse cx="23" cy="58" rx="11.5" ry="10.5"/><path d="M19 59Q19 80 28 95" stroke-width="1"/><path d="M8 86V66C8 58 12 52 18 50"/></g></g><g transform="translate(627,0) scale(-1,1)"><g transform="translate(21,20)"><g fill="none" stroke="#cbc7b3" stroke-width="1.15"><ellipse cx="58" cy="25" rx="6.5" ry="12.5" transform="rotate(12 58 25)"/><path d="M52 23Q66 18 82 16"/><path d="M72 8.7Q58 9 51 21"/><path d="M8 13C9 6 16 8 15 16C14 21 9 22 10 27"/><path d="M19 27C16 18 22 8 29 9C36 10 39 18 37 27"/><path d="M13 27.5H51M16 34H47"/><path d="M25 27V55M32.6 22V54M37.7 25V50"/><circle cx="44" cy="39" r="5"/><circle cx="40" cy="48" r="3.8"/><ellipse cx="16" cy="30" rx="8" ry="10"/><ellipse cx="23" cy="58" rx="11.5" ry="10.5"/><path d="M19 59Q19 80 28 95" stroke-width="1"/><path d="M8 86V66C8 58 12 52 18 50"/></g></g></g></svg><div style="position:absolute;left:132.7px;top:57.6479px;font-size:39.4px;color:#a0533a;white-space:nowrap;line-height:1;font-family:'Liberation Sans', sans-serif;font-weight:normal;font-style:normal;letter-spacing:2px;transform-origin:0 0;transform:scaleX(0.9387);">Short-Term Memory</div><div style="left:62px;top:205px;width:9px;height:9px;background:#d8a830"></div><div style="left:88px;top:198px;font-size:21px;line-height:1;font-weight:bold;color:#3a2612;letter-spacing:0.5px;text-shadow:1px 0 0 #3a2612;white-space:nowrap;transform-origin:0 0;transform:scaleX(0.757)">Temporary storage for info you are paying attention to.</div><div style="left:62px;top:248px;width:9px;height:9px;background:#d8a830"></div><div style="left:88px;top:241px;font-size:21px;line-height:1;font-weight:bold;color:#3a2612;letter-spacing:0.5px;text-shadow:1px 0 0 #3a2612;white-space:nowrap;transform-origin:0 0;transform:scaleX(0.836)">AKA Working Memory :</div><div style="left:62px;top:291px;width:9px;height:9px;background:#d8a830"></div><div style="left:88px;top:284px;font-size:21px;line-height:1;font-weight:bold;color:#3a2612;letter-spacing:0.5px;text-shadow:1px 0 0 #3a2612;white-space:nowrap;transform-origin:0 0;transform:scaleX(0.792)">We can keep things in Short-term memory for ~20</div><div style="left:88px;top:313px;font-size:21px;line-height:1;font-weight:bold;color:#3a2612;letter-spacing:0.5px;text-shadow:1px 0 0 #3a2612;white-space:nowrap;transform-origin:0 0;transform:scaleX(0.8)">seconds - without active rehearsal.</div></div><div style="position:absolute;left:29px;top:389px;font-size:13px;color:#6a6a6a;white-space:nowrap;line-height:1;font-family:'Liberation Sans', sans-serif;font-weight:bold;font-style:normal;letter-spacing:0px;transform-origin:0 0;transform:scaleX(0.7948);">12</div><div style="left:46px;top:512px;width:137px;height:104px;border:1px solid #8e8e8e;background:#dcdcdc;box-shadow:1px 1px 2px rgba(0,0,0,0.3)"></div><div style="left:48px;top:514px;width:627px;height:470px;transform-origin:0 0;transform:scale(0.21212121212121213);box-shadow:none;overflow:hidden"><svg style="left:0;top:0" width="627" height="470"><defs><pattern id="pb" width="15.5" height="15.5" patternUnits="userSpaceOnUse" x="-5.5" y="-0.3"><rect width="15.5" height="15.5" fill="#564330"/><path d="M0 0L15.5 15.5M15.5 0L0 15.5" stroke="#3c2c1a" stroke-width="0.8" opacity="0.7"/><path d="M1.2 7.75Q3.5 2.6 7.75 1.6Q12 2.6 14.3 7.75Q12 12.9 7.75 13.9Q3.5 12.9 1.2 7.75Z" fill="#604c36" stroke="#3a2a18" stroke-width="1"/><circle cx="0" cy="7.75" r="1.1" fill="#6a563e"/><circle cx="15.5" cy="7.75" r="1.1" fill="#6a563e"/></pattern></defs><rect width="627" height="470" fill="url(#pb)"/><rect x="14" y="14" width="599" height="439" fill="#e3ca68" stroke="#3a2a12" stroke-width="1.4" stroke-dasharray="1.6 1.6"/><rect x="15.5" y="15.5" width="596" height="436" fill="#e8d27c"/><rect x="17" y="17" width="593" height="431" fill="none" stroke="#d8bf60" stroke-width="1" opacity="0.6"/></svg><div style="left:19px;top:20px;width:590px;height:429px;background:#f0f0f0;box-shadow:inset 0 0 44px 10px rgba(238,214,118,0.72), inset 0 0 5px 2px rgba(228,204,108,0.7)"></div><svg style="left:0;top:0" width="627" height="470"><path d="M80 28H547M29 86V439H598V86" fill="none" stroke="#cdc8b4" stroke-width="1"/><rect x="29" y="122" width="569" height="3" fill="#d9d2b6"/><g transform="translate(21,20)"><g fill="none" stroke="#cbc7b3" stroke-width="1.15"><ellipse cx="58" cy="25" rx="6.5" ry="12.5" transform="rotate(12 58 25)"/><path d="M52 23Q66 18 82 16"/><path d="M72 8.7Q58 9 51 21"/><path d="M8 13C9 6 16 8 15 16C14 21 9 22 10 27"/><path d="M19 27C16 18 22 8 29 9C36 10 39 18 37 27"/><path d="M13 27.5H51M16 34H47"/><path d="M25 27V55M32.6 22V54M37.7 25V50"/><circle cx="44" cy="39" r="5"/><circle cx="40" cy="48" r="3.8"/><ellipse cx="16" cy="30" rx="8" ry="10"/><ellipse cx="23" cy="58" rx="11.5" ry="10.5"/><path d="M19 59Q19 80 28 95" stroke-width="1"/><path d="M8 86V66C8 58 12 52 18 50"/></g></g><g transform="translate(627,0) scale(-1,1)"><g transform="translate(21,20)"><g fill="none" stroke="#cbc7b3" stroke-width="1.15"><ellipse cx="58" cy="25" rx="6.5" ry="12.5" transform="rotate(12 58 25)"/><path d="M52 23Q66 18 82 16"/><path d="M72 8.7Q58 9 51 21"/><path d="M8 13C9 6 16 8 15 16C14 21 9 22 10 27"/><path d="M19 27C16 18 22 8 29 9C36 10 39 18 37 27"/><path d="M13 27.5H51M16 34H47"/><path d="M25 27V55M32.6 22V54M37.7 25V50"/><circle cx="44" cy="39" r="5"/><circle cx="40" cy="48" r="3.8"/><ellipse cx="16" cy="30" rx="8" ry="10"/><ellipse cx="23" cy="58" rx="11.5" ry="10.5"/><path d="M19 59Q19 80 28 95" stroke-width="1"/><path d="M8 86V66C8 58 12 52 18 50"/></g></g></g></svg><div style="position:absolute;left:134.5px;top:57.6479px;font-size:39.4px;color:#a0533a;white-space:nowrap;line-height:1;font-family:'Liberation Sans', sans-serif;font-weight:normal;font-style:normal;letter-spacing:2px;transform-origin:0 0;transform:scaleX(0.9293);">Short-Term memory</div><div style="left:62px;top:166px;width:9px;height:9px;background:#d8a830"></div><div style="left:88px;top:159px;font-size:21px;line-height:1;font-weight:bold;color:#3a2612;letter-spacing:0.5px;text-shadow:1px 0 0 #3a2612;white-space:nowrap;transform-origin:0 0;transform:scaleX(0.792)">What is your Short-term memory capacity?</div><div style="left:62px;top:207px;width:9px;height:9px;background:#d8a830"></div><div style="left:88px;top:200px;font-size:21px;line-height:1;font-weight:bold;color:#3a2612;letter-spacing:0.5px;text-shadow:1px 0 0 #3a2612;white-space:nowrap;transform-origin:0 0;transform:scaleX(0.792)">Remember these?</div><div style="left:88px;top:248px;width:9px;height:9px;background:#d8a830"></div><div style="left:114px;top:241px;font-size:21px;line-height:1;font-weight:bold;color:#3a2612;letter-spacing:0.5px;text-shadow:1px 0 0 #3a2612;white-space:nowrap;transform-origin:0 0;transform:scaleX(0.836)">6 3 9 2 4 8 5</div><div style="left:88px;top:294px;width:9px;height:9px;background:#d8a830"></div><div style="left:114px;top:287px;font-size:21px;line-height:1;font-weight:bold;color:#3a2612;letter-spacing:0.5px;text-shadow:1px 0 0 #3a2612;white-space:nowrap;transform-origin:0 0;transform:scaleX(0.836)">8 6 1 3 9 5 6 4 2 1</div><div style="left:62px;top:335px;width:9px;height:9px;background:#d8a830"></div><div style="left:88px;top:328px;font-size:21px;line-height:1;font-weight:bold;color:#3a2612;letter-spacing:0.5px;text-shadow:1px 0 0 #3a2612;white-space:nowrap;transform-origin:0 0;transform:scaleX(0.748)">We can hold 7 numbers (plus or minus 2) - The Magic</div><div style="left:88px;top:355px;font-size:21px;line-height:1;font-weight:bold;color:#3a2612;letter-spacing:0.5px;text-shadow:1px 0 0 #3a2612;white-space:nowrap;transform-origin:0 0;transform:scaleX(0.85)">Number Seven</div></div><div style="position:absolute;left:29px;top:511px;font-size:13px;color:#6a6a6a;white-space:nowrap;line-height:1;font-family:'Liberation Sans', sans-serif;font-weight:bold;font-style:normal;letter-spacing:0px;transform-origin:0 0;transform:scaleX(0.7948);">13</div><div style="left:46px;top:634px;width:137px;height:104px;border:1px solid #8e8e8e;background:#dcdcdc;box-shadow:1px 1px 2px rgba(0,0,0,0.3)"></div><div style="left:48px;top:636px;width:627px;height:470px;transform-origin:0 0;transform:scale(0.21212121212121213);box-shadow:none;overflow:hidden"><svg style="left:0;top:0" width="627" height="470"><defs><pattern id="pb" width="15.5" height="15.5" patternUnits="userSpaceOnUse" x="-5.5" y="-0.3"><rect width="15.5" height="15.5" fill="#564330"/><path d="M0 0L15.5 15.5M15.5 0L0 15.5" stroke="#3c2c1a" stroke-width="0.8" opacity="0.7"/><path d="M1.2 7.75Q3.5 2.6 7.75 1.6Q12 2.6 14.3 7.75Q12 12.9 7.75 13.9Q3.5 12.9 1.2 7.75Z" fill="#604c36" stroke="#3a2a18" stroke-width="1"/><circle cx="0" cy="7.75" r="1.1" fill="#6a563e"/><circle cx="15.5" cy="7.75" r="1.1" fill="#6a563e"/></pattern></defs><rect width="627" height="470" fill="url(#pb)"/><rect x="14" y="14" width="599" height="439" fill="#e3ca68" stroke="#3a2a12" stroke-width="1.4" stroke-dasharray="1.6 1.6"/><rect x="15.5" y="15.5" width="596" height="436" fill="#e8d27c"/><rect x="17" y="17" width="593" height="431" fill="none" stroke="#d8bf60" stroke-width="1" opacity="0.6"/></svg><div style="left:19px;top:20px;width:590px;height:429px;background:#f0f0f0;box-shadow:inset 0 0 44px 10px rgba(238,214,118,0.72), inset 0 0 5px 2px rgba(228,204,108,0.7)"></div><svg style="left:0;top:0" width="627" height="470"><path d="M80 28H547M29 86V439H598V86" fill="none" stroke="#cdc8b4" stroke-width="1"/><rect x="29" y="122" width="569" height="3" fill="#d9d2b6"/><g transform="translate(21,20)"><g fill="none" stroke="#cbc7b3" stroke-width="1.15"><ellipse cx="58" cy="25" rx="6.5" ry="12.5" transform="rotate(12 58 25)"/><path d="M52 23Q66 18 82 16"/><path d="M72 8.7Q58 9 51 21"/><path d="M8 13C9 6 16 8 15 16C14 21 9 22 10 27"/><path d="M19 27C16 18 22 8 29 9C36 10 39 18 37 27"/><path d="M13 27.5H51M16 34H47"/><path d="M25 27V55M32.6 22V54M37.7 25V50"/><circle cx="44" cy="39" r="5"/><circle cx="40" cy="48" r="3.8"/><ellipse cx="16" cy="30" rx="8" ry="10"/><ellipse cx="23" cy="58" rx="11.5" ry="10.5"/><path d="M19 59Q19 80 28 95" stroke-width="1"/><path d="M8 86V66C8 58 12 52 18 50"/></g></g><g transform="translate(627,0) scale(-1,1)"><g transform="translate(21,20)"><g fill="none" stroke="#cbc7b3" stroke-width="1.15"><ellipse cx="58" cy="25" rx="6.5" ry="12.5" transform="rotate(12 58 25)"/><path d="M52 23Q66 18 82 16"/><path d="M72 8.7Q58 9 51 21"/><path d="M8 13C9 6 16 8 15 16C14 21 9 22 10 27"/><path d="M19 27C16 18 22 8 29 9C36 10 39 18 37 27"/><path d="M13 27.5H51M16 34H47"/><path d="M25 27V55M32.6 22V54M37.7 25V50"/><circle cx="44" cy="39" r="5"/><circle cx="40" cy="48" r="3.8"/><ellipse cx="16" cy="30" rx="8" ry="10"/><ellipse cx="23" cy="58" rx="11.5" ry="10.5"/><path d="M19 59Q19 80 28 95" stroke-width="1"/><path d="M8 86V66C8 58 12 52 18 50"/></g></g></g></svg><div style="position:absolute;left:132.5px;top:57.6479px;font-size:39.4px;color:#a0533a;white-space:nowrap;line-height:1;font-family:'Liberation Sans', sans-serif;font-weight:normal;font-style:normal;letter-spacing:2px;transform-origin:0 0;transform:scaleX(0.9612);">Long-Term Memory</div><div style="left:62px;top:235px;width:9px;height:9px;background:#d8a830"></div><div style="left:88px;top:228px;font-size:21px;line-height:1;font-weight:bold;color:#3a2612;letter-spacing:0.5px;text-shadow:1px 0 0 #3a2612;white-space:nowrap;transform-origin:0 0;transform:scaleX(0.792)">Stores all the information you've ever learned that you</div><div style="left:88px;top:253px;font-size:21px;line-height:1;font-weight:bold;color:#3a2612;letter-spacing:0.5px;text-shadow:1px 0 0 #3a2612;white-space:nowrap;transform-origin:0 0;transform:scaleX(0.8)">system memory.</div></div><div style="position:absolute;left:29px;top:633px;font-size:13px;color:#6a6a6a;white-space:nowrap;line-height:1;font-family:'Liberation Sans', sans-serif;font-weight:bold;font-style:normal;letter-spacing:0px;transform-origin:0 0;transform:scaleX(0.7948);">14</div></div></div><svg style="left:26px;top:482px;" width="13" height="9" viewBox="0 0 13 9"><path d="M7 0L12 4.5L7 9L2 4.5Z" fill="#4a7ad8" stroke="#1a3a8a" stroke-width="0.8"/><path d="M0 3H3M0 5H3M1 7H3" stroke="#555" stroke-width="0.7"/></svg><div style="position:absolute;left:8px;top:722px;width:1167px;height:31px;background:#f4f5f7"></div><div style="position:absolute;left:8px;top:721px;width:1167px;height:1px;background:#d7d9dc"></div><div style="position:absolute;left:8px;top:752px;width:1167px;height:1px;background:#c9cbcf"></div><div style="position:absolute;left:796px;top:722px;width:1px;height:30px;background:#d7d9dc"></div><div style="position:absolute;left:12px;top:728px;width:3px;height:3px;background:#5a5f66;border-right:1px solid #fff;border-bottom:1px solid #fff"></div><div style="position:absolute;left:12px;top:732px;width:3px;height:3px;background:#5a5f66;border-right:1px solid #fff;border-bottom:1px solid #fff"></div><div style="position:absolute;left:12px;top:736px;width:3px;height:3px;background:#5a5f66;border-right:1px solid #fff;border-bottom:1px solid #fff"></div><div style="position:absolute;left:12px;top:740px;width:3px;height:3px;background:#5a5f66;border-right:1px solid #fff;border-bottom:1px solid #fff"></div><div style="position:absolute;left:12px;top:744px;width:3px;height:3px;background:#5a5f66;border-right:1px solid #fff;border-bottom:1px solid #fff"></div><div style="position:absolute;left:20px;top:724px;width:25px;height:27px;background:#c3ddf6;border:1px solid #7fb2e5"></div><svg style="left:24px;top:729px;" width="17" height="17" viewBox="0 0 17 17"><path d="M2 1V14L5.5 10.5L8 16L10 15L7.5 9.5H12Z" fill="#fff" stroke="#111" stroke-width="1.1"/></svg><svg style="left:57px;top:729px;" width="17" height="17" viewBox="0 0 17 17"><path d="M1 15L15 1" stroke="#2a64c0" stroke-width="1.6"/></svg><svg style="left:82px;top:729px;" width="17" height="17" viewBox="0 0 17 17"><path d="M1 8H14M9 3L14 8L9 13" stroke="#2a64c0" stroke-width="1.8" fill="none"/></svg><svg style="left:107px;top:729px;" width="17" height="17" viewBox="0 0 17 17"><rect x="0.5" y="3.5" width="15" height="9" fill="#5aa8f0" stroke="#1a4a9a"/></svg><svg style="left:132px;top:729px;" width="17" height="17" viewBox="0 0 17 17"><ellipse cx="8" cy="8" rx="7.5" ry="4.8" fill="#5aa8f0" stroke="#1a4a9a"/></svg><svg style="left:159px;top:729px;" width="17" height="17" viewBox="0 0 17 17"><text x="7.5" y="15" font-size="18" font-family="Liberation Serif" font-weight="bold" fill="#3a5a7a" text-anchor="middle">T</text></svg><svg style="left:189px;top:729px;" width="17" height="17" viewBox="0 0 17 17"><path d="M1 12Q4 8 6 12T11 13T15 12" stroke="#2a64c0" stroke-width="1.6" fill="none"/><path d="M5 10L13 2L15 4L7 12L4 13Z" fill="#f3c232" stroke="#6a4b10" stroke-width="0.8"/><path d="M13 2L14 1L16 3L15 4Z" fill="#e2607a"/></svg><svg style="left:225px;top:729px;" width="17" height="17" viewBox="0 0 17 17"><path d="M3 3L7 5L8 11L13 13" stroke="#2a64c0" stroke-width="1.5" fill="none"/><circle cx="3" cy="3" r="2.4" fill="#4a90e0" stroke="#1a4a9a" stroke-width="0.8"/><circle cx="13" cy="13" r="2.4" fill="#4a90e0" stroke="#1a4a9a" stroke-width="0.8"/></svg><svg style="left:261px;top:729px;" width="17" height="17" viewBox="0 0 17 17"><path d="M8 0.5L15.5 8L8 15.5L0.5 8Z" fill="#5aa8f0" stroke="#1a5aaa"/></svg><svg style="left:297px;top:729px;" width="17" height="17" viewBox="0 0 17 17"><circle cx="8" cy="8" r="7.5" fill="#6ab0f0" stroke="#1a5aaa"/><path d="M4.5 9Q8 13 11.5 9" stroke="#1a4a9a" stroke-width="1.1" fill="none"/><path d="M5 6.5Q6 5 7 6.5M9 6.5Q10 5 11 6.5" stroke="#1a4a9a" fill="none"/></svg><svg style="left:333px;top:729px;" width="17" height="17" viewBox="0 0 17 17"><path d="M0.5 8L5 3.5V6H11V3.5L15.5 8L11 12.5V10H5V12.5Z" fill="#8ac4f4" stroke="#1a5aaa"/></svg><svg style="left:370px;top:728px;" width="17" height="17" viewBox="0 0 17 17"><rect x="1.5" y="1.5" width="13" height="14" fill="#6ab0f0" stroke="#1a4a9a"/><path d="M1.5 4.5H14.5M4.5 4.5V15.5" stroke="#1a4a9a"/></svg><svg style="left:405px;top:729px;" width="17" height="17" viewBox="0 0 17 17"><path d="M1.5 2.5Q1.5 0.5 3.5 0.5H13.5Q15.5 0.5 15.5 2.5V9.5Q15.5 11.5 13.5 11.5H6L2.5 15V11.5Q1.5 11.5 1.5 9.5Z" fill="#8ac4f4" stroke="#1a5aaa"/></svg><svg style="left:441px;top:729px;" width="17" height="17" viewBox="0 0 17 17"><path d="M8 0.5L10 6H15.5L11 9.5L13 15.5L8 11.8L3 15.5L5 9.5L0.5 6H6Z" fill="#6ab0f0" stroke="#1a4a9a"/></svg><svg style="left:486px;top:729px;" width="17" height="17" viewBox="0 0 17 17"><path d="M3 3H11L14 9L11 14L3 14L1 8Z" fill="none" stroke="#2a64c0" stroke-width="1.2"/><circle cx="3" cy="3" r="1.8" fill="#1a4a9a"/><circle cx="11" cy="3" r="1.8" fill="#1a4a9a"/><circle cx="14" cy="9" r="1.8" fill="#1a4a9a"/><circle cx="11" cy="14" r="1.8" fill="#1a4a9a"/><circle cx="3" cy="14" r="1.8" fill="#1a4a9a"/></svg><svg style="left:512px;top:729px;" width="17" height="17" viewBox="0 0 17 17"><path d="M2 14L11 5" stroke="#2a64c0" stroke-width="1.5"/><path d="M9 3L13 0L16 3L13 7Z" fill="#f0b030" stroke="#8a5a10" stroke-width="0.8"/><circle cx="2" cy="14" r="1.5" fill="#2a64c0"/></svg><svg style="left:544px;top:728px;" width="17" height="17" viewBox="0 0 17 17"><rect x="0.5" y="3.5" width="15" height="12" fill="#f8e8c0" stroke="#8a5a10" stroke-width="1.2"/><rect x="3" y="6" width="10" height="7" fill="#fff" stroke="#555" stroke-width="0.6"/><text x="8" y="12.5" font-size="7" font-family="Liberation Sans" font-weight="bold" fill="#2a4a8a" text-anchor="middle">A</text><path d="M6 3.5L8 0.5L10 3.5" stroke="#555" fill="none"/></svg><svg style="left:568px;top:729px;" width="17" height="17" viewBox="0 0 17 17"><circle cx="11" cy="5" r="4.5" fill="#f8c030" stroke="#a06a10" stroke-width="0.8"/><rect x="0.5" y="5.5" width="8" height="8" fill="#f06020" stroke="#8a3010" stroke-width="0.8"/><path d="M9 15L12 8L15 15Z" fill="#4a8ad8" stroke="#1a4a8a" stroke-width="0.8"/></svg><svg style="left:594px;top:728px;" width="17" height="17" viewBox="0 0 17 17"><rect x="0.5" y="3.5" width="15" height="12" fill="#f0a040" stroke="#8a5a10" stroke-width="1.2"/><rect x="3" y="6" width="10" height="7" fill="#6ab0e0"/><path d="M3 13L7 9L10 11L13 8V13Z" fill="#4aa04a"/><path d="M6 3.5L8 0.5L10 3.5" stroke="#555" fill="none"/></svg><svg style="left:627px;top:729px;" width="17" height="17" viewBox="0 0 17 17"><path d="M4 12A6 6 0 1 1 13 11" stroke="#3a6ab0" stroke-width="3" fill="none"/><path d="M4 12A6 6 0 1 1 13 11" stroke="#8ab8e8" stroke-width="1.2" fill="none"/><circle cx="8" cy="8" r="2.5" fill="#3a6ab0"/></svg><svg style="left:651px;top:729px;" width="17" height="17" viewBox="0 0 17 17"><rect x="0.5" y="0.5" width="15" height="15" fill="#fff" stroke="#8a939b"/><path d="M0.5 0V16" stroke="#2ca02c" stroke-width="2"/><rect x="2.5" y="5.5" width="5" height="5" fill="#4a90e0"/><path d="M15 8H10M12 5.5L9.5 8L12 10.5" stroke="#e04a20" stroke-width="1.5" fill="none"/></svg><svg style="left:686px;top:729px;" width="17" height="17" viewBox="0 0 17 17"><rect x="0.5" y="5.5" width="10" height="10" fill="#4a6a8a" stroke="#223"/><rect x="4.5" y="1.5" width="11" height="11" rx="1" fill="#f8c830" stroke="#8a6a10"/></svg><svg style="left:731px;top:729px;" width="17" height="17" viewBox="0 0 17 17"><rect x="0.5" y="0.5" width="7" height="7" fill="#4a8ad8" stroke="#1a4a8a" stroke-width="0.8"/><path d="M8 9L14 7L16 10V15L10 16L8 13Z" fill="#6ab0f0" stroke="#1a4a8a" stroke-width="0.8"/><path d="M3 8Q3 13 9 13" stroke="#f06020" stroke-width="2" fill="none"/></svg><svg style="left:758px;top:729px;" width="17" height="17" viewBox="0 0 17 17"><path d="M5 4L5 11M1.5 7.5H8.5M2.5 5L7.5 10M7.5 5L2.5 10" stroke="#f07020" stroke-width="1.3"/><path d="M9 1H15V7M15 1L9 7" stroke="#2a64c0" stroke-width="1.5" fill="none"/><path d="M9 8V16L11 14L13 17L14 16L12.5 13.5H15Z" fill="#fff" stroke="#111" stroke-width="0.9"/></svg><svg style="left:214px;top:735px;" width="6" height="4" viewBox="0 0 6 4"><path d="M0 0H6L3 3.5Z" fill="#111"/></svg><svg style="left:250px;top:735px;" width="6" height="4" viewBox="0 0 6 4"><path d="M0 0H6L3 3.5Z" fill="#111"/></svg><svg style="left:287px;top:735px;" width="6" height="4" viewBox="0 0 6 4"><path d="M0 0H6L3 3.5Z" fill="#111"/></svg><svg style="left:323px;top:735px;" width="6" height="4" viewBox="0 0 6 4"><path d="M0 0H6L3 3.5Z" fill="#111"/></svg><svg style="left:359px;top:735px;" width="6" height="4" viewBox="0 0 6 4"><path d="M0 0H6L3 3.5Z" fill="#111"/></svg><svg style="left:395px;top:735px;" width="6" height="4" viewBox="0 0 6 4"><path d="M0 0H6L3 3.5Z" fill="#111"/></svg><svg style="left:431px;top:735px;" width="6" height="4" viewBox="0 0 6 4"><path d="M0 0H6L3 3.5Z" fill="#111"/></svg><svg style="left:467px;top:735px;" width="6" height="4" viewBox="0 0 6 4"><path d="M0 0H6L3 3.5Z" fill="#111"/></svg><svg style="left:677px;top:735px;" width="6" height="4" viewBox="0 0 6 4"><path d="M0 0H6L3 3.5Z" fill="#111"/></svg><svg style="left:713px;top:735px;" width="6" height="4" viewBox="0 0 6 4"><path d="M0 0H6L3 3.5Z" fill="#111"/></svg><div style="position:absolute;left:48px;top:730px;width:1px;height:15px;background:#c9ccd0"></div><div style="position:absolute;left:182px;top:730px;width:1px;height:15px;background:#c9ccd0"></div><div style="position:absolute;left:478px;top:730px;width:1px;height:15px;background:#c9ccd0"></div><div style="position:absolute;left:537px;top:730px;width:1px;height:15px;background:#c9ccd0"></div><div style="position:absolute;left:619px;top:730px;width:1px;height:15px;background:#c9ccd0"></div><div style="position:absolute;left:723px;top:730px;width:1px;height:15px;background:#c9ccd0"></div><div style="position:absolute;left:784px;top:725px;width:10px;height:25px;background:linear-gradient(#f4f5f7,#8a8a8a)"></div><svg style="left:786px;top:743px;" width="6" height="4" viewBox="0 0 6 4"><path d="M0 0H6L3 3.5Z" fill="#111"/></svg><div style="position:absolute;left:8px;top:753px;width:1167px;height:22px;background:#f0f0f0"></div><div style="position:absolute;left:18.8px;top:759.8px;font-size:12.3px;color:#000;white-space:nowrap;line-height:1;font-family:'Liberation Sans', sans-serif;font-weight:normal;font-style:normal;letter-spacing:0px;transform-origin:0 0;transform:scaleX(0.9311);">Shape 'AutoShape 3' selected</div><div style="position:absolute;left:420px;top:756px;width:1px;height:18px;background:#b8b8b8"></div><div style="position:absolute;left:641px;top:756px;width:1px;height:18px;background:#b8b8b8"></div><div style="position:absolute;left:658px;top:756px;width:1px;height:18px;background:#b8b8b8"></div><div style="position:absolute;left:687px;top:756px;width:1px;height:18px;background:#b8b8b8"></div><div style="position:absolute;left:757px;top:756px;width:1px;height:18px;background:#b8b8b8"></div><div style="position:absolute;left:995px;top:756px;width:1px;height:18px;background:#b8b8b8"></div><div style="position:absolute;left:1138px;top:756px;width:1px;height:18px;background:#b8b8b8"></div><svg style="left:428px;top:756px;" width="16" height="15" viewBox="0 0 16 15"><path d="M0 4.5H7M3.5 1V8" stroke="#1a3ad8" stroke-width="1"/><rect x="4.5" y="5.5" width="10" height="8" fill="none" stroke="#333" stroke-dasharray="1 1"/></svg><div style="position:absolute;left:448px;top:759.8px;font-size:12.3px;color:#000;white-space:nowrap;line-height:1;font-family:'Liberation Sans', sans-serif;font-weight:normal;font-style:normal;letter-spacing:0px;transform-origin:0 0;transform:scaleX(0.8946);">6.69 / 5.51</div><svg style="left:535px;top:756px;" width="16" height="15" viewBox="0 0 16 15"><rect x="4.5" y="2.5" width="10" height="10" fill="none" stroke="#333" stroke-dasharray="1 1"/><path d="M6 0.5H8M11 0.5H13M1 7V9M1 11V13" stroke="#333"/></svg><div style="position:absolute;left:553.7px;top:759.8px;font-size:12.3px;color:#000;white-space:nowrap;line-height:1;font-family:'Liberation Sans', sans-serif;font-weight:normal;font-style:normal;letter-spacing:0px;transform-origin:0 0;transform:scaleX(0.8873);">1.78 x 1.67</div><div style="position:absolute;left:645px;top:759.8px;font-size:12.3px;color:#444;white-space:nowrap;line-height:1;font-family:'Liberation Sans', sans-serif;font-weight:normal;font-style:normal;letter-spacing:0px;transform-origin:0 0;transform:scaleX(1.0000);">*</div><div style="position:absolute;left:688px;top:759.8px;font-size:12.3px;color:#000;white-space:nowrap;line-height:1;font-family:'Liberation Sans', sans-serif;font-weight:normal;font-style:normal;letter-spacing:0px;transform-origin:0 0;transform:scaleX(0.9429);">Slide 11 / 46</div><div style="position:absolute;left:762px;top:759.8px;font-size:12.3px;color:#000;white-space:nowrap;line-height:1;font-family:'Liberation Sans', sans-serif;font-weight:normal;font-style:normal;letter-spacing:0px;transform-origin:0 0;transform:scaleX(0.9620);">Title2</div><svg style="left:1000px;top:759px;" width="13" height="13" viewBox="0 0 13 13"><circle cx="6.5" cy="6.5" r="5.8" fill="#dfe9f4" stroke="#3a5a80" stroke-width="1.2"/><path d="M3.5 6.5H9.5" stroke="#1a3a60" stroke-width="1.4"/></svg><div style="position:absolute;left:1017px;top:765px;width:96px;height:1px;background:#777"></div><div style="position:absolute;left:1064px;top:761px;width:1px;height:9px;background:#777"></div><div style="position:absolute;left:1017px;top:766px;width:96px;height:1px;background:#fff"></div><svg style="left:1031px;top:759px;" width="13" height="13" viewBox="0 0 13 13"><circle cx="6" cy="6.5" r="4.3" fill="#6a94bd" stroke="#2f4d6c" stroke-width="1.1"/><path d="M6 1V2.5" stroke="#555"/></svg><svg style="left:1118px;top:759px;" width="13" height="13" viewBox="0 0 13 13"><circle cx="6.5" cy="6.5" r="5.8" fill="#dfe9f4" stroke="#3a5a80" stroke-width="1.2"/><path d="M3.5 6.5H9.5M6.5 3.5V9.5" stroke="#1a3a60" stroke-width="1.4"/></svg><div style="position:absolute;left:1142.4px;top:759.8px;font-size:12.3px;color:#000;white-space:nowrap;line-height:1;font-family:'Liberation Sans', sans-serif;font-weight:normal;font-style:normal;letter-spacing:0px;transform-origin:0 0;transform:scaleX(0.9178);">46%</div></body></html>
